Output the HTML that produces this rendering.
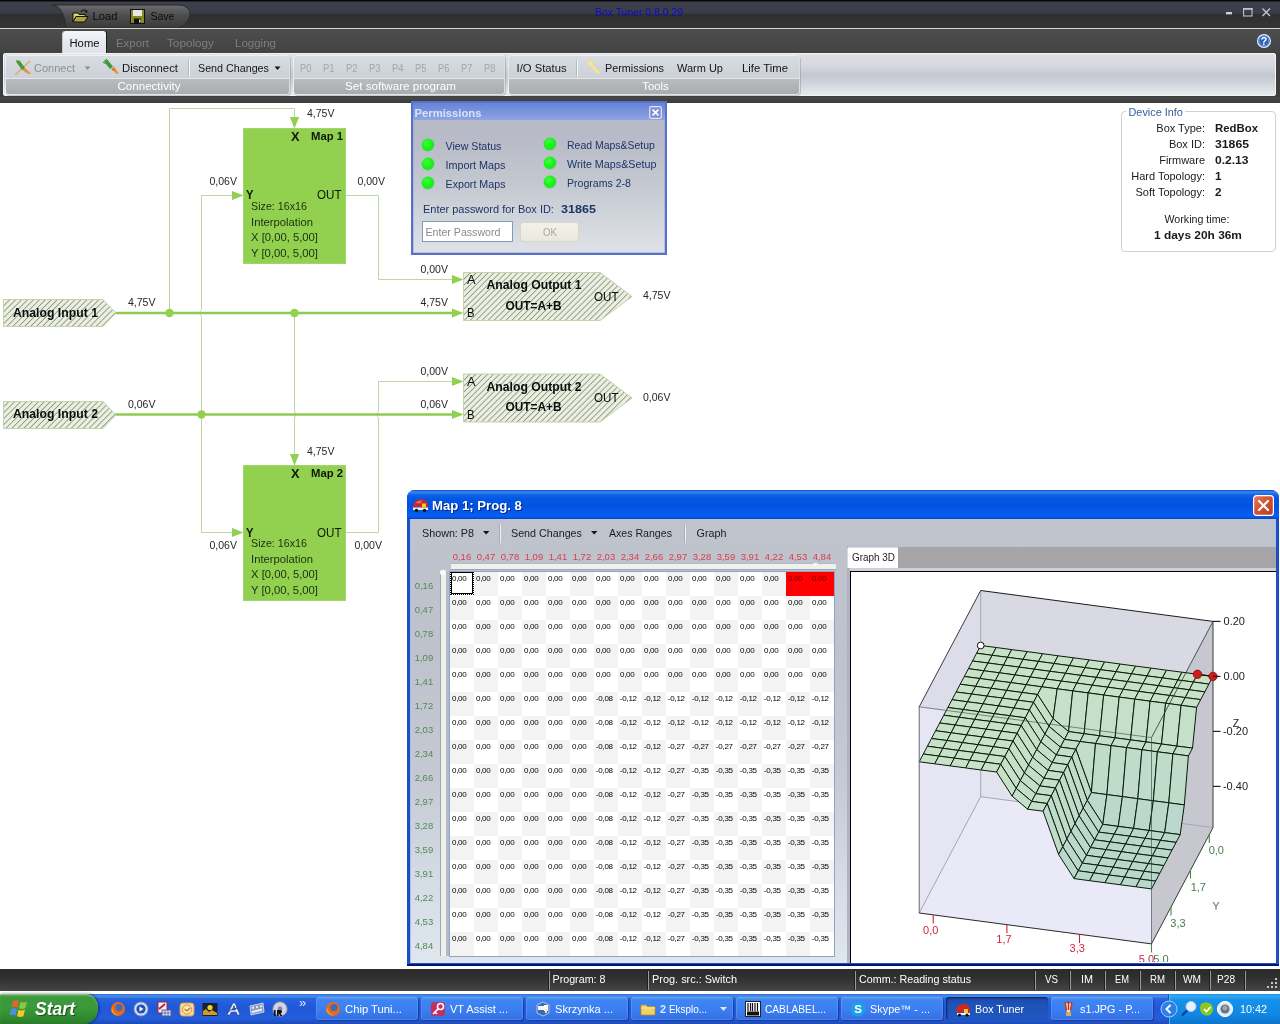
<!DOCTYPE html>
<html lang="en"><head><meta charset="utf-8"><title>Box Tuner 0.8.0.29</title><style>
html,body{margin:0;padding:0;}
body{width:1280px;height:1024px;overflow:hidden;background:#fff;position:relative;font-family:"Liberation Sans",sans-serif;}
#app{position:absolute;left:0;top:0;width:1280px;height:1024px;overflow:hidden;will-change:transform;}
#app div,#app span,#app svg{position:absolute;}
#app span{white-space:nowrap;}
#app .grid{display:grid;grid-template-columns:repeat(16,24px);grid-auto-rows:24px;}
#app .grid i{position:static;display:block;font-style:normal;font-size:8px;line-height:9px;padding-top:1.5px;text-align:left;padding-left:2px;letter-spacing:-.3px;box-sizing:border-box;height:24px;}
</style></head>
<body><div id="app">
<!-- canvas diagram -->
<svg style="left:0;top:103px" width="1280" height="866" viewBox="0 103 1280 866"><defs><pattern id="hat" width="4.2" height="4.2" patternUnits="userSpaceOnUse" patternTransform="rotate(-45)"><rect width="4.2" height="4.2" fill="#ebefdf"/><rect width="4.2" height="0.85" fill="#8b9482"/></pattern></defs><path d="M169.5,313 V108.5 H294.5 V118" fill="none" stroke="#bcd7a6" stroke-width="1"/><path d="M294.5,313 V411 q3,3.5 0,7 V455" fill="none" stroke="#bcd7a6" stroke-width="1"/><path d="M201.5,414.5 V316.5 q-3.5,-3.5 0,-7 V195.5 H232" fill="none" stroke="#bcd7a6" stroke-width="1"/><path d="M201.5,414.5 V532.5 H232" fill="none" stroke="#bcd7a6" stroke-width="1"/><path d="M346,195.5 H378.5 V279.5 H452" fill="none" stroke="#bcd7a6" stroke-width="1"/><path d="M346,532.5 H378.5 V418 q-3.5,-3.5 0,-7 V381.5 H452" fill="none" stroke="#bcd7a6" stroke-width="1"/><path d="M115,313 H453" fill="none" stroke="#8fcb52" stroke-width="2.4"/><path d="M115,414.5 H453" fill="none" stroke="#8fcb52" stroke-width="2.4"/><circle cx="169.5" cy="313" r="4.2" fill="#92d050"/><circle cx="294.5" cy="313" r="4.2" fill="#92d050"/><circle cx="201.5" cy="414.5" r="4.2" fill="#92d050"/><path d="M289.9,117.0 L294.5,128.5 L299.1,117.0 z" fill="#92d050"/><path d="M289.9,454.0 L294.5,465.5 L299.1,454.0 z" fill="#92d050"/><path d="M232.0,190.9 L243.5,195.5 L232.0,200.1 z" fill="#92d050"/><path d="M232.0,527.9 L243.5,532.5 L232.0,537.1 z" fill="#92d050"/><path d="M452.0,274.9 L463.5,279.5 L452.0,284.1 z" fill="#92d050"/><path d="M452.0,308.4 L463.5,313 L452.0,317.6 z" fill="#92d050"/><path d="M452.0,376.9 L463.5,381.5 L452.0,386.1 z" fill="#92d050"/><path d="M452.0,409.9 L463.5,414.5 L452.0,419.1 z" fill="#92d050"/><rect x="243.5" y="128.5" width="102" height="135" fill="#92d050" stroke="#a3d46e" stroke-width="1"/><rect x="243.5" y="465.5" width="102" height="135" fill="#92d050" stroke="#a3d46e" stroke-width="1"/><path d="M3.5,299.5 H103 L116,313 L103,326.5 H3.5 z" fill="url(#hat)" stroke="#c4d3a9" stroke-width="1"/><path d="M3.5,401.5 H103 L116,415 L103,428.5 H3.5 z" fill="url(#hat)" stroke="#c4d3a9" stroke-width="1"/><path d="M463.5,272.5 H600 L632,296.5 L600,320.5 H463.5 z" fill="url(#hat)" stroke="#c4d3a9" stroke-width="1"/><path d="M463.5,374.0 H600 L632,398.0 L600,422.0 H463.5 z" fill="url(#hat)" stroke="#c4d3a9" stroke-width="1"/></svg>
<span style="left:13.0px;top:305.5px;font-size:12.24px;line-height:15px;color:#0c0c0c;font-weight:bold;">Analog Input 1</span>
<span style="left:13.0px;top:407.0px;font-size:12.24px;line-height:15px;color:#0c0c0c;font-weight:bold;">Analog Input 2</span>
<span style="left:307.0px;top:106.5px;font-size:10.52px;line-height:13px;color:#26262c;">4,75V</span>
<span style="left:209.5px;top:174.5px;font-size:10.52px;line-height:13px;color:#26262c;">0,06V</span>
<span style="left:357.5px;top:174.5px;font-size:10.52px;line-height:13px;color:#26262c;">0,00V</span>
<span style="left:128.0px;top:295.5px;font-size:10.52px;line-height:13px;color:#26262c;">4,75V</span>
<span style="left:128.0px;top:397.5px;font-size:10.52px;line-height:13px;color:#26262c;">0,06V</span>
<span style="left:420.5px;top:263.0px;font-size:10.52px;line-height:13px;color:#26262c;">0,00V</span>
<span style="left:420.5px;top:295.5px;font-size:10.52px;line-height:13px;color:#26262c;">4,75V</span>
<span style="left:420.5px;top:364.5px;font-size:10.52px;line-height:13px;color:#26262c;">0,00V</span>
<span style="left:420.5px;top:397.5px;font-size:10.52px;line-height:13px;color:#26262c;">0,06V</span>
<span style="left:643.0px;top:289.0px;font-size:10.52px;line-height:13px;color:#26262c;">4,75V</span>
<span style="left:643.0px;top:391.0px;font-size:10.52px;line-height:13px;color:#26262c;">0,06V</span>
<span style="left:307.0px;top:444.5px;font-size:10.52px;line-height:13px;color:#26262c;">4,75V</span>
<span style="left:209.5px;top:538.5px;font-size:10.52px;line-height:13px;color:#26262c;">0,06V</span>
<span style="left:354.5px;top:538.5px;font-size:10.52px;line-height:13px;color:#26262c;">0,00V</span>
<span style="left:291.0px;top:129.0px;font-size:12.74px;line-height:15px;color:#10180a;font-weight:bold;">X</span>
<span style="left:311.0px;top:128.5px;font-size:11.29px;line-height:14px;color:#10180a;font-weight:bold;">Map 1</span>
<span style="left:246.0px;top:186.5px;font-size:13px;line-height:16px;color:#10180a;font-weight:bold;transform:scaleX(0.865);transform-origin:0 50%;">Y</span>
<span style="left:317.0px;top:186.5px;font-size:13px;line-height:16px;color:#10180a;transform:scaleX(0.893);transform-origin:0 50%;">OUT</span>
<span style="left:251.0px;top:200.0px;font-size:10.72px;line-height:13px;color:#1c3010;">Size: 16x16</span>
<span style="left:251.0px;top:214.5px;font-size:11.26px;line-height:14px;color:#1c3010;">Interpolation</span>
<span style="left:251.0px;top:230.0px;font-size:11.26px;line-height:14px;color:#1c3010;">X [0,00, 5,00]</span>
<span style="left:251.0px;top:245.5px;font-size:11.3px;line-height:14px;color:#1c3010;">Y [0,00, 5,00]</span>
<span style="left:291.0px;top:466.0px;font-size:12.74px;line-height:15px;color:#10180a;font-weight:bold;">X</span>
<span style="left:311.0px;top:465.5px;font-size:11.29px;line-height:14px;color:#10180a;font-weight:bold;">Map 2</span>
<span style="left:246.0px;top:524.5px;font-size:13px;line-height:16px;color:#10180a;font-weight:bold;transform:scaleX(0.865);transform-origin:0 50%;">Y</span>
<span style="left:317.0px;top:524.5px;font-size:13px;line-height:16px;color:#10180a;transform:scaleX(0.893);transform-origin:0 50%;">OUT</span>
<span style="left:251.0px;top:537.0px;font-size:10.72px;line-height:13px;color:#1c3010;">Size: 16x16</span>
<span style="left:251.0px;top:551.5px;font-size:11.26px;line-height:14px;color:#1c3010;">Interpolation</span>
<span style="left:251.0px;top:567.0px;font-size:11.26px;line-height:14px;color:#1c3010;">X [0,00, 5,00]</span>
<span style="left:251.0px;top:582.5px;font-size:11.3px;line-height:14px;color:#1c3010;">Y [0,00, 5,00]</span>
<span style="left:467.0px;top:272.0px;font-size:12.74px;line-height:15px;color:#0c0c0c;">A</span>
<span style="left:467.0px;top:306.0px;font-size:12.7px;line-height:15px;color:#0c0c0c;transform:scaleX(0.885);transform-origin:0 50%;">B</span>
<span style="left:486.5px;top:278.0px;font-size:12.22px;line-height:15px;color:#0c0c0c;font-weight:bold;">Analog Output 1</span>
<span style="left:505.5px;top:298.5px;font-size:11.86px;line-height:14px;color:#0c0c0c;font-weight:bold;">OUT=A+B</span>
<span style="left:593.5px;top:288.5px;font-size:13px;line-height:16px;color:#0c0c0c;transform:scaleX(0.893);transform-origin:0 50%;">OUT</span>
<span style="left:467.0px;top:373.5px;font-size:12.74px;line-height:15px;color:#0c0c0c;">A</span>
<span style="left:467.0px;top:407.5px;font-size:12.7px;line-height:15px;color:#0c0c0c;transform:scaleX(0.885);transform-origin:0 50%;">B</span>
<span style="left:486.5px;top:379.5px;font-size:12.22px;line-height:15px;color:#0c0c0c;font-weight:bold;">Analog Output 2</span>
<span style="left:505.5px;top:400.0px;font-size:11.86px;line-height:14px;color:#0c0c0c;font-weight:bold;">OUT=A+B</span>
<span style="left:593.5px;top:390.0px;font-size:13px;line-height:16px;color:#0c0c0c;transform:scaleX(0.893);transform-origin:0 50%;">OUT</span>
<!-- app chrome -->
<div style="left:0px;top:0px;width:1280px;height:28px;background:linear-gradient(#000 0,#0a0a0c 1px,#3e414c 2px,#3b3e48 13px,#2f2f30 14.5px,#353535 28px);"></div>
<svg style="left:50px;top:4px" width="150" height="25" viewBox="0 0 150 25"><defs><linearGradient id="qa" x1="0" y1="0" x2="0" y2="1"><stop offset="0" stop-color="#6b6c70"/><stop offset=".45" stop-color="#4e4e50"/><stop offset="1" stop-color="#3a3a3a"/></linearGradient></defs><path d="M2,1 C10,2 14,8 16,24 L128,24 C136,22 140,14 140,10 C140,5 136,1 128,1 Z" fill="url(#qa)" stroke="#2a2a2c" stroke-width="1"/></svg>
<svg style="left:72px;top:8px" width="18" height="16" viewBox="0 0 18 16"><path d="M9,4 C10,1 14,1 15,4" fill="none" stroke="#111" stroke-width="1.2"/><path d="M15,5 l-2.5,-1.5 l2.8,-1 z" fill="#111"/><path d="M1,5 h5 l1,1.5 h6 v2 h-9 l-3,5.5 z" fill="#d8d878" stroke="#111" stroke-width="1"/><path d="M4,8.5 h12 l-3.5,5.5 h-11.5 z" fill="#a8a830" stroke="#111" stroke-width="1"/></svg>
<span style="left:92.5px;top:10.0px;font-size:11.24px;line-height:13px;color:#0c0c0c;">Load</span>
<svg style="left:130px;top:9px" width="16" height="16" viewBox="0 0 16 16"><rect x="0.5" y="0.5" width="14" height="14" fill="#8a8a20" stroke="#111"/><rect x="3" y="1" width="9" height="6" fill="#e8e8e8"/><rect x="4" y="9.5" width="7" height="5" fill="#111"/><rect x="9" y="10.5" width="1.6" height="3" fill="#d8d8d8"/></svg>
<span style="left:150.5px;top:10.0px;font-size:10.53px;line-height:13px;color:#0c0c0c;">Save</span>
<span style="left:595.0px;top:6.5px;font-size:10.41px;line-height:12px;color:#0a0ad0;">Box Tuner 0.8.0.29</span>
<svg style="left:1220px;top:4px" width="56" height="18" viewBox="0 0 56 18"><rect x="6" y="8" width="6" height="2.4" fill="#cfcfcf"/><rect x="23.6" y="4.6" width="8.4" height="7.4" fill="none" stroke="#c4c4c8" stroke-width="1.1"/><rect x="23" y="4" width="9.6" height="1.8" fill="#c4c4c8"/><path d="M42.5,4.5 l7.5,7.5 M50,4.5 l-7.5,7.5" stroke="#c8c8cc" stroke-width="1.3"/></svg>
<div style="left:0px;top:28px;width:1280px;height:1px;background:#d6d6d6;"></div>
<div style="left:0px;top:29px;width:1280px;height:24px;background:linear-gradient(#4d4d4d,#434343);"></div>
<div style="left:63px;top:31px;width:43px;height:23px;background:linear-gradient(#f4f6fa,#e4e7ed 60%,#dfe2e8);border-radius:3px 3px 0 0;box-shadow:1px 0 0 #1c1c1c, -1px 0 0 #c8c8c8;"></div>
<span style="left:69.5px;top:35.7px;font-size:11.25px;line-height:14px;color:#101010;">Home</span>
<span style="left:116.0px;top:35.7px;font-size:11.42px;line-height:14px;color:#7e7e7e;">Export</span>
<span style="left:167.0px;top:35.7px;font-size:11.74px;line-height:14px;color:#7e7e7e;">Topology</span>
<span style="left:235.0px;top:35.7px;font-size:11.52px;line-height:14px;color:#7e7e7e;">Logging</span>
<svg style="left:1256px;top:33px" width="16" height="16" viewBox="0 0 16 16"><circle cx="8" cy="8" r="6.4" fill="#2b62bc" stroke="#e8f0ff" stroke-width="1.2"/><circle cx="8" cy="8" r="4.8" fill="none" stroke="#7aa4e8" stroke-width=".7"/><text x="8" y="12" font-size="10.5" font-weight="bold" text-anchor="middle" fill="#fff" font-family="Liberation Sans, sans-serif">?</text></svg>
<div style="left:0px;top:53px;width:1280px;height:50px;background:#3e3e3e;"></div>
<div style="left:0px;top:97px;width:1280px;height:6px;background:linear-gradient(#484848,#3a3a3a);"></div>
<div style="left:3px;top:53px;width:1273px;height:43px;background:linear-gradient(#e0e1e6 0,#d6d8de 30%,#c3c7d0 52%,#d3d8de 75%,#e8eeef 100%);border-radius:3px;box-shadow:0 0 0 1px #f4f4f6 inset;"></div>
<div style="left:6px;top:56px;width:283px;height:38px;border-radius:3px;background:linear-gradient(#d9dde3 0,#d2d6dd 10px,#cdd2da 22px,#b9bbbd 23px,#a9abac 38px);box-shadow:0 0 0 1px rgba(255,255,255,.55), 1px 1px 0 1px rgba(120,124,130,.35);"></div><div style="left:6px;top:78px;width:283px;height:1px;background:rgba(255,255,255,.55);"></div><span style="left:117.5px;top:79.0px;font-size:11.57px;line-height:14px;color:#fff;">Connectivity</span>
<div style="left:294px;top:56px;width:210px;height:38px;border-radius:3px;background:linear-gradient(#d9dde3 0,#d2d6dd 10px,#cdd2da 22px,#b9bbbd 23px,#a9abac 38px);box-shadow:0 0 0 1px rgba(255,255,255,.55), 1px 1px 0 1px rgba(120,124,130,.35);"></div><div style="left:294px;top:78px;width:210px;height:1px;background:rgba(255,255,255,.55);"></div><span style="left:345.0px;top:79.0px;font-size:11.61px;line-height:14px;color:#fff;">Set software program</span>
<div style="left:509px;top:56px;width:290px;height:38px;border-radius:3px;background:linear-gradient(#d9dde3 0,#d2d6dd 10px,#cdd2da 22px,#b9bbbd 23px,#a9abac 38px);box-shadow:0 0 0 1px rgba(255,255,255,.55), 1px 1px 0 1px rgba(120,124,130,.35);"></div><div style="left:509px;top:78px;width:290px;height:1px;background:rgba(255,255,255,.55);"></div><span style="left:642.3px;top:79.0px;font-size:11.35px;line-height:14px;color:#fff;">Tools</span>
<svg style="left:13px;top:58px" width="20" height="19" viewBox="0 0 20 19"><path d="M2,17 L17,3 M3,3 L18,16" stroke="#e0a860" stroke-width="1.6" opacity=".9"/><path d="M3,2 l4,1 l5,7 l-3,2 l-5,-7 z" fill="#3f9a3a"/><path d="M9,12 l3,-2 l5,6 l-2,-.2 z" fill="#e89040"/></svg>
<span style="left:34.0px;top:61.5px;font-size:11.01px;line-height:13px;color:#8d9096;">Connect</span>
<svg style="left:84px;top:66px" width="8" height="5"><path d="M0.5,0.5 h6 l-3,3.5 z" fill="#8d9096"/></svg>
<svg style="left:102px;top:58px" width="20" height="19" viewBox="0 0 20 19"><path d="M2,2 l4,0.5 l5,6 l-3,2.5 l-5,-6 z" fill="#3f9a3a"/><path d="M4,1 l1.5,2 M1,4 l2,1.5" stroke="#2a7a2a" stroke-width="1"/><path d="M9,11 l3,-2.5 l5,7.5 l-3,-.5 z" fill="#e89040"/><path d="M10,12 l3,-1" stroke="#c86820" stroke-width="1"/></svg>
<span style="left:122.0px;top:61.0px;font-size:11.32px;line-height:14px;color:#15151a;">Disconnect</span>
<div style="left:189px;top:59px;width:1px;height:18px;background:#f6f7f9;box-shadow:-1px 0 0 #b4b8c0;"></div>
<span style="left:198.0px;top:61.5px;font-size:10.73px;line-height:13px;color:#15151a;">Send Changes</span>
<svg style="left:274px;top:66px" width="8" height="5"><path d="M0.5,0.5 h6 l-3,3.5 z" fill="#15151a"/></svg>
<span style="left:300.0px;top:61.5px;font-size:11px;line-height:13px;color:#a2a6ad;transform:scaleX(0.855);transform-origin:0 50%;">P0</span>
<span style="left:323.0px;top:61.5px;font-size:11px;line-height:13px;color:#a2a6ad;transform:scaleX(0.855);transform-origin:0 50%;">P1</span>
<span style="left:346.0px;top:61.5px;font-size:11px;line-height:13px;color:#a2a6ad;transform:scaleX(0.855);transform-origin:0 50%;">P2</span>
<span style="left:369.0px;top:61.5px;font-size:11px;line-height:13px;color:#a2a6ad;transform:scaleX(0.855);transform-origin:0 50%;">P3</span>
<span style="left:392.0px;top:61.5px;font-size:11px;line-height:13px;color:#a2a6ad;transform:scaleX(0.855);transform-origin:0 50%;">P4</span>
<span style="left:415.0px;top:61.5px;font-size:11px;line-height:13px;color:#a2a6ad;transform:scaleX(0.855);transform-origin:0 50%;">P5</span>
<span style="left:438.0px;top:61.5px;font-size:11px;line-height:13px;color:#a2a6ad;transform:scaleX(0.855);transform-origin:0 50%;">P6</span>
<span style="left:461.0px;top:61.5px;font-size:11px;line-height:13px;color:#a2a6ad;transform:scaleX(0.855);transform-origin:0 50%;">P7</span>
<span style="left:484.0px;top:61.5px;font-size:11px;line-height:13px;color:#a2a6ad;transform:scaleX(0.855);transform-origin:0 50%;">P8</span>
<span style="left:516.5px;top:61.0px;font-size:11.25px;line-height:14px;color:#15151a;">I/O Status</span>
<div style="left:577px;top:59px;width:1px;height:18px;background:#f6f7f9;box-shadow:-1px 0 0 #b4b8c0;"></div>
<svg style="left:585px;top:59px" width="18" height="17" viewBox="0 0 18 17"><path d="M3,2 l3,-1 l3,3 l-1,2 l7,7 l-1,2 l-2,0 l-7,-8 l-2,0 z" fill="#f4e6a0" stroke="#ecd884" stroke-width=".7" opacity=".9"/></svg>
<span style="left:605.0px;top:61.5px;font-size:10.83px;line-height:13px;color:#15151a;">Permissions</span>
<span style="left:677.0px;top:61.5px;font-size:10.99px;line-height:13px;color:#15151a;">Warm Up</span>
<span style="left:742.0px;top:61.0px;font-size:11.34px;line-height:14px;color:#15151a;">Life Time</span>
<div style="left:0px;top:969px;width:1280px;height:22px;background:linear-gradient(#2a2a2a 0,#303030 40%,#454545 100%);"></div>
<div style="left:549px;top:971px;width:1px;height:19px;background:#9a9a9a;box-shadow:-1px 0 0 #1e1e1e;"></div>
<div style="left:648px;top:971px;width:1px;height:19px;background:#9a9a9a;box-shadow:-1px 0 0 #1e1e1e;"></div>
<div style="left:855px;top:971px;width:1px;height:19px;background:#9a9a9a;box-shadow:-1px 0 0 #1e1e1e;"></div>
<div style="left:1035px;top:971px;width:1px;height:19px;background:#9a9a9a;box-shadow:-1px 0 0 #1e1e1e;"></div>
<div style="left:1070px;top:971px;width:1px;height:19px;background:#9a9a9a;box-shadow:-1px 0 0 #1e1e1e;"></div>
<div style="left:1105px;top:971px;width:1px;height:19px;background:#9a9a9a;box-shadow:-1px 0 0 #1e1e1e;"></div>
<div style="left:1140px;top:971px;width:1px;height:19px;background:#9a9a9a;box-shadow:-1px 0 0 #1e1e1e;"></div>
<div style="left:1175px;top:971px;width:1px;height:19px;background:#9a9a9a;box-shadow:-1px 0 0 #1e1e1e;"></div>
<div style="left:1210px;top:971px;width:1px;height:19px;background:#9a9a9a;box-shadow:-1px 0 0 #1e1e1e;"></div>
<div style="left:1245px;top:971px;width:1px;height:19px;background:#9a9a9a;box-shadow:-1px 0 0 #1e1e1e;"></div>
<span style="left:552.5px;top:973.0px;font-size:10.71px;line-height:13px;color:#fff;">Program: 8</span>
<span style="left:652.0px;top:973.0px;font-size:10.93px;line-height:13px;color:#fff;">Prog. src.: Switch</span>
<span style="left:859.0px;top:973.0px;font-size:10.72px;line-height:13px;color:#fff;">Comm.: Reading status</span>
<span style="left:1045.0px;top:973.0px;font-size:11px;line-height:13px;color:#fff;transform:scaleX(0.886);transform-origin:0 50%;">VS</span>
<span style="left:1080.5px;top:973.0px;font-size:11px;line-height:13px;color:#fff;transform:scaleX(0.982);transform-origin:0 50%;">IM</span>
<span style="left:1114.5px;top:973.0px;font-size:11px;line-height:13px;color:#fff;transform:scaleX(0.848);transform-origin:0 50%;">EM</span>
<span style="left:1149.5px;top:973.0px;font-size:11px;line-height:13px;color:#fff;transform:scaleX(0.877);transform-origin:0 50%;">RM</span>
<span style="left:1182.5px;top:973.0px;font-size:11px;line-height:13px;color:#fff;transform:scaleX(0.921);transform-origin:0 50%;">WM</span>
<span style="left:1217.0px;top:973.0px;font-size:11px;line-height:13px;color:#fff;transform:scaleX(0.920);transform-origin:0 50%;">P28</span>
<svg style="left:1266px;top:977px" width="13" height="13" viewBox="0 0 13 13"><g fill="#c8c8c8"><rect x="9" y="1" width="2" height="2"/><rect x="5" y="5" width="2" height="2"/><rect x="9" y="5" width="2" height="2"/><rect x="1" y="9" width="2" height="2"/><rect x="5" y="9" width="2" height="2"/><rect x="9" y="9" width="2" height="2"/></g></svg>
<!-- taskbar -->
<div style="left:0px;top:991px;width:1280px;height:3px;background:#fff;"></div>
<div style="left:0px;top:994px;width:1280px;height:30px;background:linear-gradient(#3168d5 0,#4993e6 2px,#2663e0 5px,#2157d7 14px,#245ddb 24px,#1d4bb8 30px);"></div>
<div style="left:0px;top:994px;width:98px;height:30px;background:linear-gradient(#5eac56 0,#3c993c 4px,#3a9a3a 14px,#2f8a2f 24px,#2a7a2a 30px);border-radius:0 12px 14px 0/0 14px 16px 0;box-shadow:1px 0 3px rgba(0,0,40,.55), inset 0 1px 1px rgba(255,255,255,.35);"></div>
<svg style="left:10px;top:999px" width="20" height="20" viewBox="0 0 20 20"><path d="M3,2 q3,-1.5 6,0 l-1.5,6.5 q-3,-1.5 -6,0 z" fill="#e8632a"/><path d="M10.5,2.8 q3,1.5 6.5,0 l-1.6,6.4 q-3.4,1.5 -6.4,0 z" fill="#8cc63f"/><path d="M1,10 q3,-1.5 6,0 l-1.5,6.5 q-3,-1.5 -6,0 z" fill="#4a8ee8"/><path d="M8.5,10.8 q3,1.5 6.5,0 l-1.6,6.4 q-3.4,1.5 -6.4,0 z" fill="#f7c52b"/></svg>
<span style="left:35.0px;top:998.5px;font-size:17.56px;line-height:21px;color:#fff;font-weight:bold;font-style:italic;text-shadow:1px 1px 1px rgba(0,0,0,.5);">Start</span>
<svg style="left:110px;top:1001px" width="16" height="16" viewBox="0 0 16 16"><circle cx="8" cy="8" r="7" fill="#e8691c"/><circle cx="9" cy="6.5" r="3.6" fill="#3d6db8"/><path d="M2,6 q1,7 7,8 q-5,1 -7.5,-4 z" fill="#f9a12a"/></svg>
<svg style="left:133px;top:1001px" width="16" height="16" viewBox="0 0 16 16"><circle cx="8" cy="8" r="7" fill="#d8dfe8" stroke="#7f95b8"/><circle cx="8" cy="8" r="4.6" fill="#2050c0"/><path d="M6.5,5.5 l4,2.5 l-4,2.5 z" fill="#fff"/></svg>
<svg style="left:156px;top:1001px" width="16" height="16" viewBox="0 0 16 16"><rect x="2" y="1" width="9" height="11" fill="#f4f4f4" stroke="#a02030"/><path d="M3,8 l6,-5" stroke="#c02040" stroke-width="2"/><rect x="6" y="9" width="9" height="6" fill="#e8e8f0" stroke="#5060a0"/><path d="M6,12 h9 M9,9 v6 M12,9 v6" stroke="#5060a0" stroke-width=".8"/></svg>
<svg style="left:179px;top:1001px" width="16" height="16" viewBox="0 0 16 16"><rect x="1" y="2" width="14" height="13" rx="3" fill="#f4d9a0" stroke="#d8a050"/><circle cx="8" cy="8.5" r="4.5" fill="#fbe9b8" stroke="#d89030"/><path d="M5.5,8 l2.5,2 l3,-3" stroke="#c07010" fill="none" stroke-width="1.2"/></svg>
<svg style="left:202px;top:1001px" width="16" height="16" viewBox="0 0 16 16"><rect x="0.5" y="2" width="15" height="13" fill="#1a2030"/><circle cx="8" cy="6.5" r="2.6" fill="#f4d030"/><path d="M1,14 v-4 l3,-2 l3,3 l3,-2 l5,3 v2 z" fill="#c8a020"/></svg>
<svg style="left:226px;top:1001px" width="16" height="16" viewBox="0 0 16 16"><path d="M1,14 l6,-12 h2 l5,12 h-2.6 l-1.2,-3 h-5 l-1.4,3 z M6.2,9 h3.4 l-1.6,-4.4 z" fill="#f4f6ff" stroke="#2a50a8" stroke-width=".7"/><path d="M0,12 q8,-6 16,-5" stroke="#2a50a8" fill="none"/></svg>
<svg style="left:249px;top:1001px" width="16" height="16" viewBox="0 0 16 16"><path d="M1,5 l13,-3 l1,9 l-13,3 z" fill="#8c9cb8" stroke="#dfe6f4" stroke-width=".8"/><path d="M3,6 l2,-.5 v2 l-2,.5 z M7,5.2 l2,-.5 v2 l-2,.5 z M11,4.4 l2,-.5 v2 l-2,.5 z M3,10 l10,-2.4 v2 l-10,2.4 z" fill="#e8eef8"/></svg>
<svg style="left:272px;top:1001px" width="16" height="16" viewBox="0 0 16 16"><circle cx="8" cy="8" r="7.2" fill="#d0d4e4" stroke="#8088a8"/><circle cx="8" cy="8" r="2.4" fill="#7a84b0"/><path d="M2,15 v-6 h1.6 v6 z M5,15 v-6 h3 q2,0 2,1.8 q0,1.4 -1.4,1.8 l1.8,2.4 h-2 l-1.4,-2.2 h-.4 v2.2 z" fill="#101010"/></svg>
<span style="left:299.0px;top:995.0px;font-size:13px;line-height:16px;color:#dfe9ff;">»</span>
<div style="left:316px;top:997px;width:102px;height:23px;background:linear-gradient(#5a9af8 0,#3f86f2 3px,#3a7df0 60%,#336fe2 100%);border-radius:3px;box-shadow:inset 0 0 0 1px rgba(255,255,255,.12), 1px 1px 1px rgba(0,0,60,.35);"></div>
<svg style="left:325px;top:1001px" width="16" height="16" viewBox="0 0 16 16"><circle cx="8" cy="8" r="7" fill="#e8691c"/><circle cx="9" cy="6.5" r="3.6" fill="#3d6db8"/><path d="M2,6 q1,7 7,8 q-5,1 -7.5,-4 z" fill="#f9a12a"/></svg>
<span style="left:345.0px;top:1002.5px;font-size:11px;line-height:13px;color:#fff;transform:scaleX(1.024);transform-origin:0 50%;">Chip Tuni...</span>
<div style="left:421px;top:997px;width:102px;height:23px;background:linear-gradient(#5a9af8 0,#3f86f2 3px,#3a7df0 60%,#336fe2 100%);border-radius:3px;box-shadow:inset 0 0 0 1px rgba(255,255,255,.12), 1px 1px 1px rgba(0,0,60,.35);"></div>
<svg style="left:430px;top:1001px" width="16" height="16" viewBox="0 0 16 16"><rect x="1" y="1" width="14" height="14" rx="3" fill="#c03060"/><circle cx="10.5" cy="5.5" r="3" fill="none" stroke="#fff" stroke-width="1.6"/><path d="M8.5,7.5 l-5.5,5.5 M5,11 l2,2" stroke="#fff" stroke-width="1.6"/></svg>
<span style="left:450.0px;top:1002.5px;font-size:11px;line-height:13px;color:#fff;transform:scaleX(1.002);transform-origin:0 50%;">VT Assist ...</span>
<div style="left:526px;top:997px;width:102px;height:23px;background:linear-gradient(#5a9af8 0,#3f86f2 3px,#3a7df0 60%,#336fe2 100%);border-radius:3px;box-shadow:inset 0 0 0 1px rgba(255,255,255,.12), 1px 1px 1px rgba(0,0,60,.35);"></div>
<svg style="left:535px;top:1001px" width="16" height="16" viewBox="0 0 16 16"><path d="M2,4 l6,-3 l6,3 v8 l-6,3 l-6,-3 z" fill="#3a6ab8" stroke="#dfe8f8" stroke-width=".7"/><rect x="3" y="5" width="6" height="4" fill="#f4f4f4"/><rect x="9" y="4" width="4" height="6" fill="#f8f8ff"/><rect x="10" y="8" width="2" height="4" fill="#f8e0a0"/></svg>
<span style="left:555.0px;top:1002.5px;font-size:11px;line-height:13px;color:#fff;transform:scaleX(1.009);transform-origin:0 50%;">Skrzynka ...</span>
<div style="left:631px;top:997px;width:102px;height:23px;background:linear-gradient(#5a9af8 0,#3f86f2 3px,#3a7df0 60%,#336fe2 100%);border-radius:3px;box-shadow:inset 0 0 0 1px rgba(255,255,255,.12), 1px 1px 1px rgba(0,0,60,.35);"></div>
<svg style="left:640px;top:1001px" width="16" height="16" viewBox="0 0 16 16"><path d="M1,4 h5 l1.5,1.5 h7.5 v8.5 h-14 z" fill="#f4d060" stroke="#b89020" stroke-width=".8"/><path d="M1,7 h14" stroke="#fbe9a0"/></svg>
<span style="left:660.0px;top:1002.5px;font-size:10.79px;line-height:13px;color:#dfe8ff;font-weight:bold;">2</span>
<span style="left:669.0px;top:1002.5px;font-size:11px;line-height:13px;color:#fff;transform:scaleX(0.901);transform-origin:0 50%;">Eksplo...</span>
<svg style="left:720px;top:1007px" width="8" height="5"><path d="M0,0 h7 l-3.5,4 z" fill="#dfe8ff"/></svg>
<div style="left:736px;top:997px;width:102px;height:23px;background:linear-gradient(#5a9af8 0,#3f86f2 3px,#3a7df0 60%,#336fe2 100%);border-radius:3px;box-shadow:inset 0 0 0 1px rgba(255,255,255,.12), 1px 1px 1px rgba(0,0,60,.35);"></div>
<svg style="left:745px;top:1001px" width="16" height="16" viewBox="0 0 16 16"><rect x="0.5" y="0.5" width="15" height="15" fill="#fff" stroke="#222"/><path d="M3,2 v8 M5.5,2 v8 M7.5,2 v8 M10,2 v8 M12.5,2 v8" stroke="#111" stroke-width="1.2"/><rect x="2" y="10.5" width="12" height="4" fill="#111"/></svg>
<span style="left:765.0px;top:1002.5px;font-size:11px;line-height:13px;color:#fff;transform:scaleX(0.924);transform-origin:0 50%;">CABLABEL...</span>
<div style="left:841px;top:997px;width:102px;height:23px;background:linear-gradient(#5a9af8 0,#3f86f2 3px,#3a7df0 60%,#336fe2 100%);border-radius:3px;box-shadow:inset 0 0 0 1px rgba(255,255,255,.12), 1px 1px 1px rgba(0,0,60,.35);"></div>
<svg style="left:850px;top:1001px" width="16" height="16" viewBox="0 0 16 16"><circle cx="8" cy="8" r="7.5" fill="#1aa0e8"/><text x="8" y="12.2" font-size="11.5" font-weight="bold" text-anchor="middle" fill="#fff" font-family="Liberation Sans, sans-serif">S</text></svg>
<span style="left:870.0px;top:1002.5px;font-size:11px;line-height:13px;color:#fff;transform:scaleX(0.991);transform-origin:0 50%;">Skype™ - ...</span>
<div style="left:946px;top:997px;width:102px;height:23px;background:linear-gradient(#1a48a8,#1e52b7 30%,#2058c0);border-radius:3px;box-shadow:inset 1px 1px 2px rgba(0,0,30,.6);"></div>
<svg style="left:955px;top:1001px" width="16" height="16" viewBox="0 0 16 16"><path d="M1,11 q0,-7 6,-8 q5,-1 8,4 v5 z" fill="#c82828"/><path d="M2,12 h13 v2 h-13 z" fill="#f0f0f0"/><circle cx="4.5" cy="14" r="1.6" fill="#111"/><circle cx="12" cy="14" r="1.6" fill="#111"/><rect x="9" y="8" width="4" height="4" fill="#f0d020"/></svg>
<span style="left:975.0px;top:1002.5px;font-size:11px;line-height:13px;color:#fff;transform:scaleX(0.977);transform-origin:0 50%;">Box Tuner</span>
<div style="left:1051px;top:997px;width:102px;height:23px;background:linear-gradient(#5a9af8 0,#3f86f2 3px,#3a7df0 60%,#336fe2 100%);border-radius:3px;box-shadow:inset 0 0 0 1px rgba(255,255,255,.12), 1px 1px 1px rgba(0,0,60,.35);"></div>
<svg style="left:1060px;top:1001px" width="16" height="16" viewBox="0 0 16 16"><path d="M4,2 l3,10 h3 l3,-10 z" fill="#e8e0d0" stroke="#806040" stroke-width=".7"/><path d="M5,1 l1.5,8 M8.5,0 v9 M12,1 l-1.5,8" stroke="#c83030" stroke-width="1.4"/><rect x="6" y="11" width="5" height="4" fill="#d0b060"/></svg>
<span style="left:1080.0px;top:1002.5px;font-size:11px;line-height:13px;color:#fff;transform:scaleX(0.985);transform-origin:0 50%;">s1.JPG - P...</span>
<div style="left:1169px;top:994px;width:111px;height:30px;background:linear-gradient(#1a8fe8 0,#35a8f4 2px,#1592ea 6px,#1088e4 20px,#0e74cc 30px);box-shadow:-1px 0 0 #0c58b0, inset 1px 0 0 #4cb4f8;"></div>
<svg style="left:1160px;top:1000px" width="18" height="18" viewBox="0 0 18 18"><circle cx="9" cy="9" r="8" fill="#2f7fe8" stroke="#9cccff" stroke-width="1"/><path d="M10.5,5 l-4,4 l4,4" stroke="#fff" stroke-width="2" fill="none"/></svg>
<svg style="left:1180px;top:1000px" width="18" height="18" viewBox="0 0 18 18"><circle cx="11" cy="6.5" r="5" fill="#e8f0ff" stroke="#b8c8f0"/><path d="M7,10.5 l-5,5" stroke="#1a3a90" stroke-width="2.4"/></svg>
<svg style="left:1199px;top:1001px" width="16" height="16" viewBox="0 0 16 16"><path d="M2,3 q6,-4 11,1 q3,6 -2,10 q-6,2 -9,-3 q-2,-4 0,-8 z" fill="#8cc820"/><path d="M5,8 l2.5,2.5 l4,-4.5" stroke="#fff" stroke-width="1.6" fill="none"/></svg>
<svg style="left:1216px;top:1000px" width="18" height="18" viewBox="0 0 18 18"><circle cx="9" cy="9" r="7.6" fill="#e4ecf4" stroke="#fff"/><circle cx="9" cy="9" r="4.6" fill="#687888"/><circle cx="9" cy="8" r="2.4" fill="#98a8b8"/></svg>
<span style="left:1240.0px;top:1002.5px;font-size:10.79px;line-height:13px;color:#fff;">10:42</span>
<!-- floating panels -->
<div style="left:411px;top:101px;width:256px;height:154px;background:linear-gradient(#b4b8c4 0,#b9bcc8 25%,#c4c8d0 55%,#dfe3e8 100%);border:2px solid #5870c8;box-sizing:border-box;box-shadow:0 0 0 0.5px #8ea0e0 inset;"></div>
<div style="left:413px;top:103px;width:252px;height:17px;background:linear-gradient(#6684d8,#7d97de 60%,#8ea5e2);"></div>
<span style="left:414.5px;top:106.0px;font-size:11.27px;line-height:14px;color:#d9e3f8;font-weight:bold;">Permissions</span>
<svg style="left:649px;top:106px" width="13" height="13" viewBox="0 0 13 13"><rect x=".7" y=".7" width="11.6" height="11.6" rx="1.5" fill="#7a90d8" stroke="#f4dcec" stroke-width="1.2"/><path d="M3.6,3.6 l5.8,5.8 M9.4,3.6 l-5.8,5.8" stroke="#fff" stroke-width="1.7"/></svg>
<svg style="left:420px;top:137px" width="16" height="16" viewBox="0 0 16 16"><defs><radialGradient id="led428145" cx=".4" cy=".35" r=".7"><stop offset="0" stop-color="#40ff40"/><stop offset=".7" stop-color="#10f010"/><stop offset="1" stop-color="#30d030" stop-opacity=".6"/></radialGradient></defs><circle cx="8" cy="8" r="6.4" fill="url(#led428145)"/></svg>
<svg style="left:420px;top:156px" width="16" height="16" viewBox="0 0 16 16"><defs><radialGradient id="led428164" cx=".4" cy=".35" r=".7"><stop offset="0" stop-color="#40ff40"/><stop offset=".7" stop-color="#10f010"/><stop offset="1" stop-color="#30d030" stop-opacity=".6"/></radialGradient></defs><circle cx="8" cy="8" r="6.4" fill="url(#led428164)"/></svg>
<svg style="left:420px;top:175px" width="16" height="16" viewBox="0 0 16 16"><defs><radialGradient id="led428183" cx=".4" cy=".35" r=".7"><stop offset="0" stop-color="#40ff40"/><stop offset=".7" stop-color="#10f010"/><stop offset="1" stop-color="#30d030" stop-opacity=".6"/></radialGradient></defs><circle cx="8" cy="8" r="6.4" fill="url(#led428183)"/></svg>
<svg style="left:542px;top:136px" width="16" height="16" viewBox="0 0 16 16"><defs><radialGradient id="led550144" cx=".4" cy=".35" r=".7"><stop offset="0" stop-color="#40ff40"/><stop offset=".7" stop-color="#10f010"/><stop offset="1" stop-color="#30d030" stop-opacity=".6"/></radialGradient></defs><circle cx="8" cy="8" r="6.4" fill="url(#led550144)"/></svg>
<svg style="left:542px;top:155px" width="16" height="16" viewBox="0 0 16 16"><defs><radialGradient id="led550163" cx=".4" cy=".35" r=".7"><stop offset="0" stop-color="#40ff40"/><stop offset=".7" stop-color="#10f010"/><stop offset="1" stop-color="#30d030" stop-opacity=".6"/></radialGradient></defs><circle cx="8" cy="8" r="6.4" fill="url(#led550163)"/></svg>
<svg style="left:542px;top:174px" width="16" height="16" viewBox="0 0 16 16"><defs><radialGradient id="led550182" cx=".4" cy=".35" r=".7"><stop offset="0" stop-color="#40ff40"/><stop offset=".7" stop-color="#10f010"/><stop offset="1" stop-color="#30d030" stop-opacity=".6"/></radialGradient></defs><circle cx="8" cy="8" r="6.4" fill="url(#led550182)"/></svg>
<span style="left:445.5px;top:139.5px;font-size:10.64px;line-height:13px;color:#1c3566;">View Status</span>
<span style="left:445.5px;top:158.5px;font-size:10.8px;line-height:13px;color:#1c3566;">Import Maps</span>
<span style="left:445.5px;top:177.5px;font-size:10.69px;line-height:13px;color:#1c3566;">Export Maps</span>
<span style="left:567.0px;top:138.5px;font-size:10.48px;line-height:13px;color:#1c3566;">Read Maps&amp;Setup</span>
<span style="left:567.0px;top:157.5px;font-size:10.76px;line-height:13px;color:#1c3566;">Write Maps&amp;Setup</span>
<span style="left:567.0px;top:176.5px;font-size:10.56px;line-height:13px;color:#1c3566;">Programs 2-8</span>
<span style="left:423.0px;top:202.5px;font-size:10.96px;line-height:13px;color:#1c3566;">Enter password for Box ID:</span>
<span style="left:561.0px;top:202.0px;font-size:11.3px;line-height:14px;color:#1c3566;font-weight:bold;transform:scaleX(1.114);transform-origin:0 50%;">31865</span>
<div style="left:422px;top:221px;width:91px;height:21px;background:#fff;border:1px solid #7f9db9;box-sizing:border-box;"></div>
<span style="left:425.5px;top:225.5px;font-size:10.62px;line-height:13px;color:#8a8a8a;">Enter Password</span>
<div style="left:520px;top:222px;width:59px;height:20px;background:linear-gradient(#f3f2ea,#ebe9dc);border:1px solid #d8d6c6;border-radius:3px;box-sizing:border-box;"></div>
<span style="left:542.5px;top:225.5px;font-size:11px;line-height:13px;color:#a8a89c;transform:scaleX(0.881);transform-origin:0 50%;">OK</span>
<div style="left:1121px;top:111px;width:155px;height:141px;border:1px solid #d2d2c8;border-radius:4px;box-sizing:border-box;background:#fff;"></div>
<div style="left:1126px;top:106px;width:59px;height:12px;background:#fff;"></div>
<span style="left:1128.5px;top:105.5px;font-size:10.89px;line-height:13px;color:#3a5a9c;">Device Info</span>
<span style="left:1156.3px;top:121.5px;font-size:11px;line-height:13px;color:#1a1a1a;">Box Type:</span>
<span style="left:1214.5px;top:121.0px;font-size:11.3px;line-height:14px;color:#1a1a1a;font-weight:bold;transform:scaleX(1.007);transform-origin:0 50%;">RedBox</span>
<span style="left:1168.9px;top:137.5px;font-size:11px;line-height:13px;color:#1a1a1a;">Box ID:</span>
<span style="left:1214.5px;top:137.0px;font-size:11.3px;line-height:14px;color:#1a1a1a;font-weight:bold;transform:scaleX(1.082);transform-origin:0 50%;">31865</span>
<span style="left:1159.2px;top:153.5px;font-size:11px;line-height:13px;color:#1a1a1a;">Firmware</span>
<span style="left:1214.5px;top:153.0px;font-size:11.3px;line-height:14px;color:#1a1a1a;font-weight:bold;transform:scaleX(1.066);transform-origin:0 50%;">0.2.13</span>
<span style="left:1131.2px;top:169.5px;font-size:11px;line-height:13px;color:#1a1a1a;">Hard Topology:</span>
<span style="left:1214.5px;top:169.0px;font-size:11.3px;line-height:14px;color:#1a1a1a;font-weight:bold;transform:scaleX(1.034);transform-origin:0 50%;">1</span>
<span style="left:1135.5px;top:185.5px;font-size:11px;line-height:13px;color:#1a1a1a;">Soft Topology:</span>
<span style="left:1214.5px;top:185.0px;font-size:11.3px;line-height:14px;color:#1a1a1a;font-weight:bold;transform:scaleX(1.034);transform-origin:0 50%;">2</span>
<span style="left:1164.5px;top:212.5px;font-size:10.67px;line-height:13px;color:#1a1a1a;">Working time:</span>
<span style="left:1153.5px;top:228.0px;font-size:11.3px;line-height:14px;color:#1a1a1a;font-weight:bold;transform:scaleX(1.053);transform-origin:0 50%;">1 days 20h 36m</span>
<!-- map window -->
<div style="left:407px;top:490px;width:872px;height:476px;background:#1c4fc4;border-radius:8px 8px 0 0;"></div>
<div style="left:407px;top:490px;width:872px;height:29px;border-radius:8px 8px 0 0;background:linear-gradient(#0a4fd0 0,#3d86f0 2px,#0e62ea 5px,#0355e4 9px,#0252e0 16px,#0458ec 22px,#0660f2 26px,#0450dd 28px,#0240c0 29px);"></div>
<div style="left:410px;top:519px;width:866px;height:444px;background:linear-gradient(#bec3cc 0,#bdc2cd 30%,#c4c9d4 58%,#d6dce5 82%,#e0e6ee 100%);box-shadow:inset 1px 0 0 #a9c0ee, inset -1px 0 0 #a9c0ee;"></div>
<div style="left:407px;top:963px;width:872px;height:3px;background:linear-gradient(#3a6ad0,#00187a 1.5px,#00146a);"></div>
<div style="left:446px;top:572px;width:3px;height:384px;background:#b3bacb;"></div>
<svg style="left:412px;top:497px" width="17" height="16" viewBox="0 0 17 16"><path d="M1,10 q0,-6 6,-7.5 q6,-1 9,4 v4 z" fill="#c8262c"/><path d="M3,6 q3,-3 7,-2.5 l-1,3 z" fill="#e86a5a"/><path d="M1,10.5 h15 v2.5 h-15 z" fill="#f2f2f2"/><rect x="10" y="6.5" width="4" height="4" fill="#e8cf2a"/><circle cx="4.5" cy="13.5" r="1.8" fill="#1a1a1a"/><circle cx="12.5" cy="13.5" r="1.8" fill="#1a1a1a"/></svg>
<span style="left:432.0px;top:498.0px;font-size:13.17px;line-height:16px;color:#fff;font-weight:bold;text-shadow:1px 1px 0 rgba(0,20,90,.7);">Map 1; Prog. 8</span>
<svg style="left:1253px;top:495px" width="21" height="21" viewBox="0 0 21 21"><defs><linearGradient id="cl" x1="0" y1="0" x2="1" y2="1"><stop offset="0" stop-color="#e8795a"/><stop offset=".5" stop-color="#d2502f"/><stop offset="1" stop-color="#b83a20"/></linearGradient></defs><rect x=".6" y=".6" width="19.8" height="19.8" rx="3" fill="url(#cl)" stroke="#fff" stroke-width="1.2"/><path d="M6,6 l9,9 M15,6 l-9,9" stroke="#fff" stroke-width="2.2" stroke-linecap="round"/></svg>
<span style="left:422.0px;top:526.5px;font-size:10.75px;line-height:13px;color:#1c1c22;">Shown: P8</span>
<svg style="left:483px;top:531px" width="7" height="4"><path d="M0,0 h6.4 l-3.2,3.6 z" fill="#111"/></svg>
<div style="left:500px;top:525px;width:1px;height:18px;background:#eef0f4;box-shadow:-1px 0 0 #a9aebb;"></div>
<span style="left:511.0px;top:526.5px;font-size:10.73px;line-height:13px;color:#1c1c22;">Send Changes</span>
<svg style="left:591px;top:531px" width="7" height="4"><path d="M0,0 h6.4 l-3.2,3.6 z" fill="#111"/></svg>
<span style="left:609.0px;top:526.5px;font-size:10.59px;line-height:13px;color:#1c1c22;">Axes Ranges</span>
<div style="left:685px;top:525px;width:1px;height:18px;background:#eef0f4;box-shadow:-1px 0 0 #a9aebb;"></div>
<span style="left:696.5px;top:526.5px;font-size:10.79px;line-height:13px;color:#1c1c22;">Graph</span>
<span style="left:452.7px;top:551.0px;font-size:9.51px;line-height:11px;color:#d8404c;">0,16</span>
<span style="left:414.7px;top:580.0px;font-size:9.51px;line-height:11px;color:#538a53;">0,16</span>
<span style="left:476.7px;top:551.0px;font-size:9.51px;line-height:11px;color:#d8404c;">0,47</span>
<span style="left:414.7px;top:604.0px;font-size:9.51px;line-height:11px;color:#538a53;">0,47</span>
<span style="left:500.7px;top:551.0px;font-size:9.51px;line-height:11px;color:#d8404c;">0,78</span>
<span style="left:414.7px;top:628.0px;font-size:9.51px;line-height:11px;color:#538a53;">0,78</span>
<span style="left:524.7px;top:551.0px;font-size:9.51px;line-height:11px;color:#d8404c;">1,09</span>
<span style="left:414.7px;top:652.0px;font-size:9.51px;line-height:11px;color:#538a53;">1,09</span>
<span style="left:548.7px;top:551.0px;font-size:9.51px;line-height:11px;color:#d8404c;">1,41</span>
<span style="left:414.7px;top:676.0px;font-size:9.51px;line-height:11px;color:#538a53;">1,41</span>
<span style="left:572.7px;top:551.0px;font-size:9.51px;line-height:11px;color:#d8404c;">1,72</span>
<span style="left:414.7px;top:700.0px;font-size:9.51px;line-height:11px;color:#538a53;">1,72</span>
<span style="left:596.7px;top:551.0px;font-size:9.51px;line-height:11px;color:#d8404c;">2,03</span>
<span style="left:414.7px;top:724.0px;font-size:9.51px;line-height:11px;color:#538a53;">2,03</span>
<span style="left:620.7px;top:551.0px;font-size:9.51px;line-height:11px;color:#d8404c;">2,34</span>
<span style="left:414.7px;top:748.0px;font-size:9.51px;line-height:11px;color:#538a53;">2,34</span>
<span style="left:644.7px;top:551.0px;font-size:9.51px;line-height:11px;color:#d8404c;">2,66</span>
<span style="left:414.7px;top:772.0px;font-size:9.51px;line-height:11px;color:#538a53;">2,66</span>
<span style="left:668.7px;top:551.0px;font-size:9.51px;line-height:11px;color:#d8404c;">2,97</span>
<span style="left:414.7px;top:796.0px;font-size:9.51px;line-height:11px;color:#538a53;">2,97</span>
<span style="left:692.7px;top:551.0px;font-size:9.51px;line-height:11px;color:#d8404c;">3,28</span>
<span style="left:414.7px;top:820.0px;font-size:9.51px;line-height:11px;color:#538a53;">3,28</span>
<span style="left:716.7px;top:551.0px;font-size:9.51px;line-height:11px;color:#d8404c;">3,59</span>
<span style="left:414.7px;top:844.0px;font-size:9.51px;line-height:11px;color:#538a53;">3,59</span>
<span style="left:740.7px;top:551.0px;font-size:9.51px;line-height:11px;color:#d8404c;">3,91</span>
<span style="left:414.7px;top:868.0px;font-size:9.51px;line-height:11px;color:#538a53;">3,91</span>
<span style="left:764.7px;top:551.0px;font-size:9.51px;line-height:11px;color:#d8404c;">4,22</span>
<span style="left:414.7px;top:892.0px;font-size:9.51px;line-height:11px;color:#538a53;">4,22</span>
<span style="left:788.7px;top:551.0px;font-size:9.51px;line-height:11px;color:#d8404c;">4,53</span>
<span style="left:414.7px;top:916.0px;font-size:9.51px;line-height:11px;color:#538a53;">4,53</span>
<span style="left:812.7px;top:551.0px;font-size:9.51px;line-height:11px;color:#d8404c;">4,84</span>
<span style="left:414.7px;top:940.0px;font-size:9.51px;line-height:11px;color:#538a53;">4,84</span>
<div style="left:451px;top:564px;width:385px;height:5px;background:#f1f1ec;box-shadow:0 1px 0 #9ea4b4, 0 -1px 0 #b4b9c6;"></div>
<div style="left:813px;top:563px;width:5px;height:3px;background:#fafaf6;border-radius:2px;"></div>
<div style="left:441px;top:572px;width:5px;height:384px;background:#f1f1ec;box-shadow:-1px 0 0 #9ea4b4;"></div>
<div style="left:440px;top:570px;width:6px;height:5px;background:#fafaf6;border-radius:2px;"></div>
<div style="left:449px;top:571px;width:386px;height:386px;background:#8fa3c4;"></div>
<div class="grid" style="left:450px;top:572px;width:384px;height:384px;"><i style="background:#ffffff;color:#000">0,00</i><i style="background:#f3f3f3;color:#000">0,00</i><i style="background:#ffffff;color:#000">0,00</i><i style="background:#f3f3f3;color:#000">0,00</i><i style="background:#ffffff;color:#000">0,00</i><i style="background:#f3f3f3;color:#000">0,00</i><i style="background:#ffffff;color:#000">0,00</i><i style="background:#f3f3f3;color:#000">0,00</i><i style="background:#ffffff;color:#000">0,00</i><i style="background:#f3f3f3;color:#000">0,00</i><i style="background:#ffffff;color:#000">0,00</i><i style="background:#f3f3f3;color:#000">0,00</i><i style="background:#ffffff;color:#000">0,00</i><i style="background:#f3f3f3;color:#000">0,00</i><i style="background:#ff0000;color:#7a0000">0,00</i><i style="background:#ff0000;color:#7a0000">0,00</i><i style="background:#f3f3f3;color:#000">0,00</i><i style="background:#ffffff;color:#000">0,00</i><i style="background:#f3f3f3;color:#000">0,00</i><i style="background:#ffffff;color:#000">0,00</i><i style="background:#f3f3f3;color:#000">0,00</i><i style="background:#ffffff;color:#000">0,00</i><i style="background:#f3f3f3;color:#000">0,00</i><i style="background:#ffffff;color:#000">0,00</i><i style="background:#f3f3f3;color:#000">0,00</i><i style="background:#ffffff;color:#000">0,00</i><i style="background:#f3f3f3;color:#000">0,00</i><i style="background:#ffffff;color:#000">0,00</i><i style="background:#f3f3f3;color:#000">0,00</i><i style="background:#ffffff;color:#000">0,00</i><i style="background:#f3f3f3;color:#000">0,00</i><i style="background:#ffffff;color:#000">0,00</i><i style="background:#ffffff;color:#000">0,00</i><i style="background:#f3f3f3;color:#000">0,00</i><i style="background:#ffffff;color:#000">0,00</i><i style="background:#f3f3f3;color:#000">0,00</i><i style="background:#ffffff;color:#000">0,00</i><i style="background:#f3f3f3;color:#000">0,00</i><i style="background:#ffffff;color:#000">0,00</i><i style="background:#f3f3f3;color:#000">0,00</i><i style="background:#ffffff;color:#000">0,00</i><i style="background:#f3f3f3;color:#000">0,00</i><i style="background:#ffffff;color:#000">0,00</i><i style="background:#f3f3f3;color:#000">0,00</i><i style="background:#ffffff;color:#000">0,00</i><i style="background:#f3f3f3;color:#000">0,00</i><i style="background:#ffffff;color:#000">0,00</i><i style="background:#f3f3f3;color:#000">0,00</i><i style="background:#f3f3f3;color:#000">0,00</i><i style="background:#ffffff;color:#000">0,00</i><i style="background:#f3f3f3;color:#000">0,00</i><i style="background:#ffffff;color:#000">0,00</i><i style="background:#f3f3f3;color:#000">0,00</i><i style="background:#ffffff;color:#000">0,00</i><i style="background:#f3f3f3;color:#000">0,00</i><i style="background:#ffffff;color:#000">0,00</i><i style="background:#f3f3f3;color:#000">0,00</i><i style="background:#ffffff;color:#000">0,00</i><i style="background:#f3f3f3;color:#000">0,00</i><i style="background:#ffffff;color:#000">0,00</i><i style="background:#f3f3f3;color:#000">0,00</i><i style="background:#ffffff;color:#000">0,00</i><i style="background:#f3f3f3;color:#000">0,00</i><i style="background:#ffffff;color:#000">0,00</i><i style="background:#ffffff;color:#000">0,00</i><i style="background:#f3f3f3;color:#000">0,00</i><i style="background:#ffffff;color:#000">0,00</i><i style="background:#f3f3f3;color:#000">0,00</i><i style="background:#ffffff;color:#000">0,00</i><i style="background:#f3f3f3;color:#000">0,00</i><i style="background:#ffffff;color:#000">0,00</i><i style="background:#f3f3f3;color:#000">0,00</i><i style="background:#ffffff;color:#000">0,00</i><i style="background:#f3f3f3;color:#000">0,00</i><i style="background:#ffffff;color:#000">0,00</i><i style="background:#f3f3f3;color:#000">0,00</i><i style="background:#ffffff;color:#000">0,00</i><i style="background:#f3f3f3;color:#000">0,00</i><i style="background:#ffffff;color:#000">0,00</i><i style="background:#f3f3f3;color:#000">0,00</i><i style="background:#f3f3f3;color:#000">0,00</i><i style="background:#ffffff;color:#000">0,00</i><i style="background:#f3f3f3;color:#000">0,00</i><i style="background:#ffffff;color:#000">0,00</i><i style="background:#f3f3f3;color:#000">0,00</i><i style="background:#ffffff;color:#000">0,00</i><i style="background:#f3f3f3;color:#000">-0,08</i><i style="background:#ffffff;color:#000">-0,12</i><i style="background:#f3f3f3;color:#000">-0,12</i><i style="background:#ffffff;color:#000">-0,12</i><i style="background:#f3f3f3;color:#000">-0,12</i><i style="background:#ffffff;color:#000">-0,12</i><i style="background:#f3f3f3;color:#000">-0,12</i><i style="background:#ffffff;color:#000">-0,12</i><i style="background:#f3f3f3;color:#000">-0,12</i><i style="background:#ffffff;color:#000">-0,12</i><i style="background:#ffffff;color:#000">0,00</i><i style="background:#f3f3f3;color:#000">0,00</i><i style="background:#ffffff;color:#000">0,00</i><i style="background:#f3f3f3;color:#000">0,00</i><i style="background:#ffffff;color:#000">0,00</i><i style="background:#f3f3f3;color:#000">0,00</i><i style="background:#ffffff;color:#000">-0,08</i><i style="background:#f3f3f3;color:#000">-0,12</i><i style="background:#ffffff;color:#000">-0,12</i><i style="background:#f3f3f3;color:#000">-0,12</i><i style="background:#ffffff;color:#000">-0,12</i><i style="background:#f3f3f3;color:#000">-0,12</i><i style="background:#ffffff;color:#000">-0,12</i><i style="background:#f3f3f3;color:#000">-0,12</i><i style="background:#ffffff;color:#000">-0,12</i><i style="background:#f3f3f3;color:#000">-0,12</i><i style="background:#f3f3f3;color:#000">0,00</i><i style="background:#ffffff;color:#000">0,00</i><i style="background:#f3f3f3;color:#000">0,00</i><i style="background:#ffffff;color:#000">0,00</i><i style="background:#f3f3f3;color:#000">0,00</i><i style="background:#ffffff;color:#000">0,00</i><i style="background:#f3f3f3;color:#000">-0,08</i><i style="background:#ffffff;color:#000">-0,12</i><i style="background:#f3f3f3;color:#000">-0,12</i><i style="background:#ffffff;color:#000">-0,27</i><i style="background:#f3f3f3;color:#000">-0,27</i><i style="background:#ffffff;color:#000">-0,27</i><i style="background:#f3f3f3;color:#000">-0,27</i><i style="background:#ffffff;color:#000">-0,27</i><i style="background:#f3f3f3;color:#000">-0,27</i><i style="background:#ffffff;color:#000">-0,27</i><i style="background:#ffffff;color:#000">0,00</i><i style="background:#f3f3f3;color:#000">0,00</i><i style="background:#ffffff;color:#000">0,00</i><i style="background:#f3f3f3;color:#000">0,00</i><i style="background:#ffffff;color:#000">0,00</i><i style="background:#f3f3f3;color:#000">0,00</i><i style="background:#ffffff;color:#000">-0,08</i><i style="background:#f3f3f3;color:#000">-0,12</i><i style="background:#ffffff;color:#000">-0,12</i><i style="background:#f3f3f3;color:#000">-0,27</i><i style="background:#ffffff;color:#000">-0,35</i><i style="background:#f3f3f3;color:#000">-0,35</i><i style="background:#ffffff;color:#000">-0,35</i><i style="background:#f3f3f3;color:#000">-0,35</i><i style="background:#ffffff;color:#000">-0,35</i><i style="background:#f3f3f3;color:#000">-0,35</i><i style="background:#f3f3f3;color:#000">0,00</i><i style="background:#ffffff;color:#000">0,00</i><i style="background:#f3f3f3;color:#000">0,00</i><i style="background:#ffffff;color:#000">0,00</i><i style="background:#f3f3f3;color:#000">0,00</i><i style="background:#ffffff;color:#000">0,00</i><i style="background:#f3f3f3;color:#000">-0,08</i><i style="background:#ffffff;color:#000">-0,12</i><i style="background:#f3f3f3;color:#000">-0,12</i><i style="background:#ffffff;color:#000">-0,27</i><i style="background:#f3f3f3;color:#000">-0,35</i><i style="background:#ffffff;color:#000">-0,35</i><i style="background:#f3f3f3;color:#000">-0,35</i><i style="background:#ffffff;color:#000">-0,35</i><i style="background:#f3f3f3;color:#000">-0,35</i><i style="background:#ffffff;color:#000">-0,35</i><i style="background:#ffffff;color:#000">0,00</i><i style="background:#f3f3f3;color:#000">0,00</i><i style="background:#ffffff;color:#000">0,00</i><i style="background:#f3f3f3;color:#000">0,00</i><i style="background:#ffffff;color:#000">0,00</i><i style="background:#f3f3f3;color:#000">0,00</i><i style="background:#ffffff;color:#000">-0,08</i><i style="background:#f3f3f3;color:#000">-0,12</i><i style="background:#ffffff;color:#000">-0,12</i><i style="background:#f3f3f3;color:#000">-0,27</i><i style="background:#ffffff;color:#000">-0,35</i><i style="background:#f3f3f3;color:#000">-0,35</i><i style="background:#ffffff;color:#000">-0,35</i><i style="background:#f3f3f3;color:#000">-0,35</i><i style="background:#ffffff;color:#000">-0,35</i><i style="background:#f3f3f3;color:#000">-0,35</i><i style="background:#f3f3f3;color:#000">0,00</i><i style="background:#ffffff;color:#000">0,00</i><i style="background:#f3f3f3;color:#000">0,00</i><i style="background:#ffffff;color:#000">0,00</i><i style="background:#f3f3f3;color:#000">0,00</i><i style="background:#ffffff;color:#000">0,00</i><i style="background:#f3f3f3;color:#000">-0,08</i><i style="background:#ffffff;color:#000">-0,12</i><i style="background:#f3f3f3;color:#000">-0,12</i><i style="background:#ffffff;color:#000">-0,27</i><i style="background:#f3f3f3;color:#000">-0,35</i><i style="background:#ffffff;color:#000">-0,35</i><i style="background:#f3f3f3;color:#000">-0,35</i><i style="background:#ffffff;color:#000">-0,35</i><i style="background:#f3f3f3;color:#000">-0,35</i><i style="background:#ffffff;color:#000">-0,35</i><i style="background:#ffffff;color:#000">0,00</i><i style="background:#f3f3f3;color:#000">0,00</i><i style="background:#ffffff;color:#000">0,00</i><i style="background:#f3f3f3;color:#000">0,00</i><i style="background:#ffffff;color:#000">0,00</i><i style="background:#f3f3f3;color:#000">0,00</i><i style="background:#ffffff;color:#000">-0,08</i><i style="background:#f3f3f3;color:#000">-0,12</i><i style="background:#ffffff;color:#000">-0,12</i><i style="background:#f3f3f3;color:#000">-0,27</i><i style="background:#ffffff;color:#000">-0,35</i><i style="background:#f3f3f3;color:#000">-0,35</i><i style="background:#ffffff;color:#000">-0,35</i><i style="background:#f3f3f3;color:#000">-0,35</i><i style="background:#ffffff;color:#000">-0,35</i><i style="background:#f3f3f3;color:#000">-0,35</i><i style="background:#f3f3f3;color:#000">0,00</i><i style="background:#ffffff;color:#000">0,00</i><i style="background:#f3f3f3;color:#000">0,00</i><i style="background:#ffffff;color:#000">0,00</i><i style="background:#f3f3f3;color:#000">0,00</i><i style="background:#ffffff;color:#000">0,00</i><i style="background:#f3f3f3;color:#000">-0,08</i><i style="background:#ffffff;color:#000">-0,12</i><i style="background:#f3f3f3;color:#000">-0,12</i><i style="background:#ffffff;color:#000">-0,27</i><i style="background:#f3f3f3;color:#000">-0,35</i><i style="background:#ffffff;color:#000">-0,35</i><i style="background:#f3f3f3;color:#000">-0,35</i><i style="background:#ffffff;color:#000">-0,35</i><i style="background:#f3f3f3;color:#000">-0,35</i><i style="background:#ffffff;color:#000">-0,35</i><i style="background:#ffffff;color:#000">0,00</i><i style="background:#f3f3f3;color:#000">0,00</i><i style="background:#ffffff;color:#000">0,00</i><i style="background:#f3f3f3;color:#000">0,00</i><i style="background:#ffffff;color:#000">0,00</i><i style="background:#f3f3f3;color:#000">0,00</i><i style="background:#ffffff;color:#000">-0,08</i><i style="background:#f3f3f3;color:#000">-0,12</i><i style="background:#ffffff;color:#000">-0,12</i><i style="background:#f3f3f3;color:#000">-0,27</i><i style="background:#ffffff;color:#000">-0,35</i><i style="background:#f3f3f3;color:#000">-0,35</i><i style="background:#ffffff;color:#000">-0,35</i><i style="background:#f3f3f3;color:#000">-0,35</i><i style="background:#ffffff;color:#000">-0,35</i><i style="background:#f3f3f3;color:#000">-0,35</i><i style="background:#f3f3f3;color:#000">0,00</i><i style="background:#ffffff;color:#000">0,00</i><i style="background:#f3f3f3;color:#000">0,00</i><i style="background:#ffffff;color:#000">0,00</i><i style="background:#f3f3f3;color:#000">0,00</i><i style="background:#ffffff;color:#000">0,00</i><i style="background:#f3f3f3;color:#000">-0,08</i><i style="background:#ffffff;color:#000">-0,12</i><i style="background:#f3f3f3;color:#000">-0,12</i><i style="background:#ffffff;color:#000">-0,27</i><i style="background:#f3f3f3;color:#000">-0,35</i><i style="background:#ffffff;color:#000">-0,35</i><i style="background:#f3f3f3;color:#000">-0,35</i><i style="background:#ffffff;color:#000">-0,35</i><i style="background:#f3f3f3;color:#000">-0,35</i><i style="background:#ffffff;color:#000">-0,35</i></div>
<div style="left:450px;top:572px;width:24px;height:23px;border:1px dotted #000;box-sizing:border-box;"></div>
<div style="left:451px;top:572px;width:22px;height:22px;border:1px solid #000;box-sizing:border-box;"></div>
<div style="left:847px;top:547px;width:429px;height:21px;background:#a7a5a8;"></div>
<div style="left:848px;top:548px;width:50px;height:20px;background:#fff;box-shadow:-1px 0 0 #d8dade,0 -1px 0 #d8dade;"></div>
<span style="left:852.0px;top:551.0px;font-size:10.8px;line-height:13px;color:#1c1c22;transform:scaleX(0.918);transform-origin:0 50%;">Graph 3D</span>
<div style="left:847px;top:568px;width:429px;height:395px;background:#ccd0d8;"></div>
<div style="left:847px;top:568px;width:3px;height:395px;background:#aeb3c0;"></div>
<div style="left:850px;top:571px;width:426px;height:392px;background:#000;"></div>
<div style="left:851px;top:572px;width:425px;height:391px;background:#fff;"></div>
<!-- 3d graph -->
<svg style="left:852px;top:573px" width="423" height="389" viewBox="852 573 423 389" font-family="Liberation Sans, sans-serif"><polygon points="980.7,796.7 1213.0,827.6 1213.0,621.4 980.7,590.5" fill="#d9d9e4"/><polygon points="980.7,796.7 919.2,913.0 919.2,706.8 980.7,590.5" fill="#dddde9"/><polygon points="980.7,796.7 1213.0,827.6 1151.5,943.9 919.2,913.0" fill="#e3e3f1"/><polygon points="1213.0,827.6 1151.5,943.9 1151.5,737.6 1213.0,621.4" fill="#c7c7d0"/><polygon points="919.2,913.0 1151.5,943.9 1151.5,737.6 919.2,706.8" fill="rgba(240,240,255,.45)"/><line x1="980.7" y1="796.7" x2="980.7" y2="590.5" stroke="#a6a6b2" stroke-width="1"/><line x1="980.7" y1="796.7" x2="1213.0" y2="827.6" stroke="#a6a6b2" stroke-width="1"/><line x1="980.7" y1="796.7" x2="919.2" y2="913.0" stroke="#a6a6b2" stroke-width="1"/><polygon points="980.7,645.5 996.2,647.5 992.1,655.3 976.6,653.2" fill="rgb(200,226,200)" stroke="#0b1a0b" stroke-width="1" stroke-linejoin="round"/><polygon points="996.2,647.5 1011.7,649.6 1007.6,657.3 992.1,655.3" fill="rgb(200,226,200)" stroke="#0b1a0b" stroke-width="1" stroke-linejoin="round"/><polygon points="1011.7,649.6 1027.2,651.6 1023.1,659.4 1007.6,657.3" fill="rgb(200,226,200)" stroke="#0b1a0b" stroke-width="1" stroke-linejoin="round"/><polygon points="1027.2,651.6 1042.6,653.7 1038.5,661.4 1023.1,659.4" fill="rgb(200,226,200)" stroke="#0b1a0b" stroke-width="1" stroke-linejoin="round"/><polygon points="1042.6,653.7 1058.1,655.8 1054.0,663.5 1038.5,661.4" fill="rgb(200,226,200)" stroke="#0b1a0b" stroke-width="1" stroke-linejoin="round"/><polygon points="1058.1,655.8 1073.6,657.8 1069.5,665.6 1054.0,663.5" fill="rgb(200,226,200)" stroke="#0b1a0b" stroke-width="1" stroke-linejoin="round"/><polygon points="1073.6,657.8 1089.1,659.9 1085.0,667.6 1069.5,665.6" fill="rgb(200,226,200)" stroke="#0b1a0b" stroke-width="1" stroke-linejoin="round"/><polygon points="1089.1,659.9 1104.6,661.9 1100.5,669.7 1085.0,667.6" fill="rgb(200,226,200)" stroke="#0b1a0b" stroke-width="1" stroke-linejoin="round"/><polygon points="1104.6,661.9 1120.1,664.0 1116.0,671.7 1100.5,669.7" fill="rgb(200,226,200)" stroke="#0b1a0b" stroke-width="1" stroke-linejoin="round"/><polygon points="1120.1,664.0 1135.6,666.1 1131.5,673.8 1116.0,671.7" fill="rgb(200,226,200)" stroke="#0b1a0b" stroke-width="1" stroke-linejoin="round"/><polygon points="1135.6,666.1 1151.1,668.1 1147.0,675.9 1131.5,673.8" fill="rgb(200,226,200)" stroke="#0b1a0b" stroke-width="1" stroke-linejoin="round"/><polygon points="1151.1,668.1 1166.5,670.2 1162.4,677.9 1147.0,675.9" fill="rgb(200,226,200)" stroke="#0b1a0b" stroke-width="1" stroke-linejoin="round"/><polygon points="1166.5,670.2 1182.0,672.2 1177.9,680.0 1162.4,677.9" fill="rgb(200,226,200)" stroke="#0b1a0b" stroke-width="1" stroke-linejoin="round"/><polygon points="1182.0,672.2 1197.5,674.3 1193.4,682.0 1177.9,680.0" fill="rgb(200,226,200)" stroke="#0b1a0b" stroke-width="1" stroke-linejoin="round"/><polygon points="1197.5,674.3 1213.0,676.4 1208.9,684.1 1193.4,682.0" fill="rgb(200,226,200)" stroke="#0b1a0b" stroke-width="1" stroke-linejoin="round"/><polygon points="976.6,653.2 992.1,655.3 988.0,663.0 972.5,661.0" fill="rgb(200,226,200)" stroke="#0b1a0b" stroke-width="1" stroke-linejoin="round"/><polygon points="992.1,655.3 1007.6,657.3 1003.5,665.1 988.0,663.0" fill="rgb(200,226,200)" stroke="#0b1a0b" stroke-width="1" stroke-linejoin="round"/><polygon points="1007.6,657.3 1023.1,659.4 1019.0,667.1 1003.5,665.1" fill="rgb(200,226,200)" stroke="#0b1a0b" stroke-width="1" stroke-linejoin="round"/><polygon points="1023.1,659.4 1038.5,661.4 1034.4,669.2 1019.0,667.1" fill="rgb(200,226,200)" stroke="#0b1a0b" stroke-width="1" stroke-linejoin="round"/><polygon points="1038.5,661.4 1054.0,663.5 1049.9,671.3 1034.4,669.2" fill="rgb(200,226,200)" stroke="#0b1a0b" stroke-width="1" stroke-linejoin="round"/><polygon points="1054.0,663.5 1069.5,665.6 1065.4,673.3 1049.9,671.3" fill="rgb(200,226,200)" stroke="#0b1a0b" stroke-width="1" stroke-linejoin="round"/><polygon points="1069.5,665.6 1085.0,667.6 1080.9,675.4 1065.4,673.3" fill="rgb(200,226,200)" stroke="#0b1a0b" stroke-width="1" stroke-linejoin="round"/><polygon points="1085.0,667.6 1100.5,669.7 1096.4,677.4 1080.9,675.4" fill="rgb(200,226,200)" stroke="#0b1a0b" stroke-width="1" stroke-linejoin="round"/><polygon points="1100.5,669.7 1116.0,671.7 1111.9,679.5 1096.4,677.4" fill="rgb(200,226,200)" stroke="#0b1a0b" stroke-width="1" stroke-linejoin="round"/><polygon points="1116.0,671.7 1131.5,673.8 1127.4,681.6 1111.9,679.5" fill="rgb(200,226,200)" stroke="#0b1a0b" stroke-width="1" stroke-linejoin="round"/><polygon points="1131.5,673.8 1147.0,675.9 1142.9,683.6 1127.4,681.6" fill="rgb(200,226,200)" stroke="#0b1a0b" stroke-width="1" stroke-linejoin="round"/><polygon points="1147.0,675.9 1162.4,677.9 1158.3,685.7 1142.9,683.6" fill="rgb(200,226,200)" stroke="#0b1a0b" stroke-width="1" stroke-linejoin="round"/><polygon points="1162.4,677.9 1177.9,680.0 1173.8,687.7 1158.3,685.7" fill="rgb(200,226,200)" stroke="#0b1a0b" stroke-width="1" stroke-linejoin="round"/><polygon points="1177.9,680.0 1193.4,682.0 1189.3,689.8 1173.8,687.7" fill="rgb(200,226,200)" stroke="#0b1a0b" stroke-width="1" stroke-linejoin="round"/><polygon points="1193.4,682.0 1208.9,684.1 1204.8,691.9 1189.3,689.8" fill="rgb(200,226,200)" stroke="#0b1a0b" stroke-width="1" stroke-linejoin="round"/><polygon points="972.5,661.0 988.0,663.0 983.9,670.8 968.4,668.7" fill="rgb(200,226,200)" stroke="#0b1a0b" stroke-width="1" stroke-linejoin="round"/><polygon points="988.0,663.0 1003.5,665.1 999.4,672.8 983.9,670.8" fill="rgb(200,226,200)" stroke="#0b1a0b" stroke-width="1" stroke-linejoin="round"/><polygon points="1003.5,665.1 1019.0,667.1 1014.9,674.9 999.4,672.8" fill="rgb(200,226,200)" stroke="#0b1a0b" stroke-width="1" stroke-linejoin="round"/><polygon points="1019.0,667.1 1034.4,669.2 1030.3,677.0 1014.9,674.9" fill="rgb(200,226,200)" stroke="#0b1a0b" stroke-width="1" stroke-linejoin="round"/><polygon points="1034.4,669.2 1049.9,671.3 1045.8,679.0 1030.3,677.0" fill="rgb(200,226,200)" stroke="#0b1a0b" stroke-width="1" stroke-linejoin="round"/><polygon points="1049.9,671.3 1065.4,673.3 1061.3,681.1 1045.8,679.0" fill="rgb(200,226,200)" stroke="#0b1a0b" stroke-width="1" stroke-linejoin="round"/><polygon points="1065.4,673.3 1080.9,675.4 1076.8,683.1 1061.3,681.1" fill="rgb(200,226,200)" stroke="#0b1a0b" stroke-width="1" stroke-linejoin="round"/><polygon points="1080.9,675.4 1096.4,677.4 1092.3,685.2 1076.8,683.1" fill="rgb(200,226,200)" stroke="#0b1a0b" stroke-width="1" stroke-linejoin="round"/><polygon points="1096.4,677.4 1111.9,679.5 1107.8,687.2 1092.3,685.2" fill="rgb(200,226,200)" stroke="#0b1a0b" stroke-width="1" stroke-linejoin="round"/><polygon points="1111.9,679.5 1127.4,681.6 1123.3,689.3 1107.8,687.2" fill="rgb(200,226,200)" stroke="#0b1a0b" stroke-width="1" stroke-linejoin="round"/><polygon points="1127.4,681.6 1142.9,683.6 1138.8,691.4 1123.3,689.3" fill="rgb(200,226,200)" stroke="#0b1a0b" stroke-width="1" stroke-linejoin="round"/><polygon points="1142.9,683.6 1158.3,685.7 1154.2,693.4 1138.8,691.4" fill="rgb(200,226,200)" stroke="#0b1a0b" stroke-width="1" stroke-linejoin="round"/><polygon points="1158.3,685.7 1173.8,687.7 1169.7,695.5 1154.2,693.4" fill="rgb(200,226,200)" stroke="#0b1a0b" stroke-width="1" stroke-linejoin="round"/><polygon points="1173.8,687.7 1189.3,689.8 1185.2,697.6 1169.7,695.5" fill="rgb(200,226,200)" stroke="#0b1a0b" stroke-width="1" stroke-linejoin="round"/><polygon points="1189.3,689.8 1204.8,691.9 1200.7,699.6 1185.2,697.6" fill="rgb(200,226,200)" stroke="#0b1a0b" stroke-width="1" stroke-linejoin="round"/><polygon points="968.4,668.7 983.9,670.8 979.8,678.5 964.3,676.5" fill="rgb(200,226,200)" stroke="#0b1a0b" stroke-width="1" stroke-linejoin="round"/><polygon points="983.9,670.8 999.4,672.8 995.3,680.6 979.8,678.5" fill="rgb(200,226,200)" stroke="#0b1a0b" stroke-width="1" stroke-linejoin="round"/><polygon points="999.4,672.8 1014.9,674.9 1010.8,682.6 995.3,680.6" fill="rgb(200,226,200)" stroke="#0b1a0b" stroke-width="1" stroke-linejoin="round"/><polygon points="1014.9,674.9 1030.3,677.0 1026.2,684.7 1010.8,682.6" fill="rgb(200,226,200)" stroke="#0b1a0b" stroke-width="1" stroke-linejoin="round"/><polygon points="1030.3,677.0 1045.8,679.0 1041.7,686.8 1026.2,684.7" fill="rgb(200,226,200)" stroke="#0b1a0b" stroke-width="1" stroke-linejoin="round"/><polygon points="1045.8,679.0 1061.3,681.1 1057.2,688.8 1041.7,686.8" fill="rgb(200,226,200)" stroke="#0b1a0b" stroke-width="1" stroke-linejoin="round"/><polygon points="1061.3,681.1 1076.8,683.1 1072.7,690.9 1057.2,688.8" fill="rgb(200,226,200)" stroke="#0b1a0b" stroke-width="1" stroke-linejoin="round"/><polygon points="1076.8,683.1 1092.3,685.2 1088.2,692.9 1072.7,690.9" fill="rgb(200,226,200)" stroke="#0b1a0b" stroke-width="1" stroke-linejoin="round"/><polygon points="1092.3,685.2 1107.8,687.2 1103.7,695.0 1088.2,692.9" fill="rgb(200,226,200)" stroke="#0b1a0b" stroke-width="1" stroke-linejoin="round"/><polygon points="1107.8,687.2 1123.3,689.3 1119.2,697.1 1103.7,695.0" fill="rgb(200,226,200)" stroke="#0b1a0b" stroke-width="1" stroke-linejoin="round"/><polygon points="1123.3,689.3 1138.8,691.4 1134.7,699.1 1119.2,697.1" fill="rgb(200,226,200)" stroke="#0b1a0b" stroke-width="1" stroke-linejoin="round"/><polygon points="1138.8,691.4 1154.2,693.4 1150.1,701.2 1134.7,699.1" fill="rgb(200,226,200)" stroke="#0b1a0b" stroke-width="1" stroke-linejoin="round"/><polygon points="1154.2,693.4 1169.7,695.5 1165.6,703.2 1150.1,701.2" fill="rgb(200,226,200)" stroke="#0b1a0b" stroke-width="1" stroke-linejoin="round"/><polygon points="1169.7,695.5 1185.2,697.6 1181.1,705.3 1165.6,703.2" fill="rgb(200,226,200)" stroke="#0b1a0b" stroke-width="1" stroke-linejoin="round"/><polygon points="1185.2,697.6 1200.7,699.6 1196.6,707.4 1181.1,705.3" fill="rgb(200,226,200)" stroke="#0b1a0b" stroke-width="1" stroke-linejoin="round"/><polygon points="964.3,676.5 979.8,678.5 975.7,686.3 960.2,684.2" fill="rgb(200,226,200)" stroke="#0b1a0b" stroke-width="1" stroke-linejoin="round"/><polygon points="979.8,678.5 995.3,680.6 991.2,688.3 975.7,686.3" fill="rgb(200,226,200)" stroke="#0b1a0b" stroke-width="1" stroke-linejoin="round"/><polygon points="995.3,680.6 1010.8,682.6 1006.7,690.4 991.2,688.3" fill="rgb(200,226,200)" stroke="#0b1a0b" stroke-width="1" stroke-linejoin="round"/><polygon points="1010.8,682.6 1026.2,684.7 1022.1,692.5 1006.7,690.4" fill="rgb(200,226,200)" stroke="#0b1a0b" stroke-width="1" stroke-linejoin="round"/><polygon points="1026.2,684.7 1041.7,686.8 1037.6,694.5 1022.1,692.5" fill="rgb(200,226,200)" stroke="#0b1a0b" stroke-width="1" stroke-linejoin="round"/><polygon points="1041.7,686.8 1057.2,688.8 1053.1,718.6 1037.6,694.5" fill="rgb(199,225,200)" stroke="#0b1a0b" stroke-width="1" stroke-linejoin="round"/><polygon points="1057.2,688.8 1072.7,690.9 1068.6,731.6 1053.1,718.6" fill="rgb(198,225,201)" stroke="#0b1a0b" stroke-width="1" stroke-linejoin="round"/><polygon points="1072.7,690.9 1088.2,692.9 1084.1,733.7 1068.6,731.6" fill="rgb(197,224,201)" stroke="#0b1a0b" stroke-width="1" stroke-linejoin="round"/><polygon points="1088.2,692.9 1103.7,695.0 1099.6,735.8 1084.1,733.7" fill="rgb(197,224,201)" stroke="#0b1a0b" stroke-width="1" stroke-linejoin="round"/><polygon points="1103.7,695.0 1119.2,697.1 1115.1,737.8 1099.6,735.8" fill="rgb(197,224,201)" stroke="#0b1a0b" stroke-width="1" stroke-linejoin="round"/><polygon points="1119.2,697.1 1134.7,699.1 1130.6,739.9 1115.1,737.8" fill="rgb(197,224,201)" stroke="#0b1a0b" stroke-width="1" stroke-linejoin="round"/><polygon points="1134.7,699.1 1150.1,701.2 1146.0,741.9 1130.6,739.9" fill="rgb(197,224,201)" stroke="#0b1a0b" stroke-width="1" stroke-linejoin="round"/><polygon points="1150.1,701.2 1165.6,703.2 1161.5,744.0 1146.0,741.9" fill="rgb(197,224,201)" stroke="#0b1a0b" stroke-width="1" stroke-linejoin="round"/><polygon points="1165.6,703.2 1181.1,705.3 1177.0,746.1 1161.5,744.0" fill="rgb(197,224,201)" stroke="#0b1a0b" stroke-width="1" stroke-linejoin="round"/><polygon points="1181.1,705.3 1196.6,707.4 1192.5,748.1 1177.0,746.1" fill="rgb(197,224,201)" stroke="#0b1a0b" stroke-width="1" stroke-linejoin="round"/><polygon points="960.2,684.2 975.7,686.3 971.6,694.0 956.1,692.0" fill="rgb(200,226,200)" stroke="#0b1a0b" stroke-width="1" stroke-linejoin="round"/><polygon points="975.7,686.3 991.2,688.3 987.1,696.1 971.6,694.0" fill="rgb(200,226,200)" stroke="#0b1a0b" stroke-width="1" stroke-linejoin="round"/><polygon points="991.2,688.3 1006.7,690.4 1002.6,698.1 987.1,696.1" fill="rgb(200,226,200)" stroke="#0b1a0b" stroke-width="1" stroke-linejoin="round"/><polygon points="1006.7,690.4 1022.1,692.5 1018.0,700.2 1002.6,698.1" fill="rgb(200,226,200)" stroke="#0b1a0b" stroke-width="1" stroke-linejoin="round"/><polygon points="1022.1,692.5 1037.6,694.5 1033.5,702.3 1018.0,700.2" fill="rgb(200,226,200)" stroke="#0b1a0b" stroke-width="1" stroke-linejoin="round"/><polygon points="1037.6,694.5 1053.1,718.6 1049.0,726.3 1033.5,702.3" fill="rgb(198,225,200)" stroke="#0b1a0b" stroke-width="1" stroke-linejoin="round"/><polygon points="1053.1,718.6 1068.6,731.6 1064.5,739.4 1049.0,726.3" fill="rgb(195,223,201)" stroke="#0b1a0b" stroke-width="1" stroke-linejoin="round"/><polygon points="1068.6,731.6 1084.1,733.7 1080.0,741.5 1064.5,739.4" fill="rgb(195,223,201)" stroke="#0b1a0b" stroke-width="1" stroke-linejoin="round"/><polygon points="1084.1,733.7 1099.6,735.8 1095.5,743.5 1080.0,741.5" fill="rgb(195,223,201)" stroke="#0b1a0b" stroke-width="1" stroke-linejoin="round"/><polygon points="1099.6,735.8 1115.1,737.8 1111.0,745.6 1095.5,743.5" fill="rgb(195,223,201)" stroke="#0b1a0b" stroke-width="1" stroke-linejoin="round"/><polygon points="1115.1,737.8 1130.6,739.9 1126.5,747.6 1111.0,745.6" fill="rgb(195,223,201)" stroke="#0b1a0b" stroke-width="1" stroke-linejoin="round"/><polygon points="1130.6,739.9 1146.0,741.9 1141.9,749.7 1126.5,747.6" fill="rgb(195,223,201)" stroke="#0b1a0b" stroke-width="1" stroke-linejoin="round"/><polygon points="1146.0,741.9 1161.5,744.0 1157.4,751.8 1141.9,749.7" fill="rgb(195,223,201)" stroke="#0b1a0b" stroke-width="1" stroke-linejoin="round"/><polygon points="1161.5,744.0 1177.0,746.1 1172.9,753.8 1157.4,751.8" fill="rgb(195,223,201)" stroke="#0b1a0b" stroke-width="1" stroke-linejoin="round"/><polygon points="1177.0,746.1 1192.5,748.1 1188.4,755.9 1172.9,753.8" fill="rgb(195,223,201)" stroke="#0b1a0b" stroke-width="1" stroke-linejoin="round"/><polygon points="956.1,692.0 971.6,694.0 967.5,701.8 952.0,699.7" fill="rgb(200,226,200)" stroke="#0b1a0b" stroke-width="1" stroke-linejoin="round"/><polygon points="971.6,694.0 987.1,696.1 983.0,703.8 967.5,701.8" fill="rgb(200,226,200)" stroke="#0b1a0b" stroke-width="1" stroke-linejoin="round"/><polygon points="987.1,696.1 1002.6,698.1 998.5,705.9 983.0,703.8" fill="rgb(200,226,200)" stroke="#0b1a0b" stroke-width="1" stroke-linejoin="round"/><polygon points="1002.6,698.1 1018.0,700.2 1013.9,708.0 998.5,705.9" fill="rgb(200,226,200)" stroke="#0b1a0b" stroke-width="1" stroke-linejoin="round"/><polygon points="1018.0,700.2 1033.5,702.3 1029.4,710.0 1013.9,708.0" fill="rgb(200,226,200)" stroke="#0b1a0b" stroke-width="1" stroke-linejoin="round"/><polygon points="1033.5,702.3 1049.0,726.3 1044.9,734.1 1029.4,710.0" fill="rgb(198,225,200)" stroke="#0b1a0b" stroke-width="1" stroke-linejoin="round"/><polygon points="1049.0,726.3 1064.5,739.4 1060.4,747.1 1044.9,734.1" fill="rgb(195,223,201)" stroke="#0b1a0b" stroke-width="1" stroke-linejoin="round"/><polygon points="1064.5,739.4 1080.0,741.5 1075.9,749.2 1060.4,747.1" fill="rgb(195,223,201)" stroke="#0b1a0b" stroke-width="1" stroke-linejoin="round"/><polygon points="1080.0,741.5 1095.5,743.5 1091.4,792.5 1075.9,749.2" fill="rgb(193,222,202)" stroke="#0b1a0b" stroke-width="1" stroke-linejoin="round"/><polygon points="1095.5,743.5 1111.0,745.6 1106.9,794.6 1091.4,792.5" fill="rgb(191,220,202)" stroke="#0b1a0b" stroke-width="1" stroke-linejoin="round"/><polygon points="1111.0,745.6 1126.5,747.6 1122.4,796.6 1106.9,794.6" fill="rgb(191,220,202)" stroke="#0b1a0b" stroke-width="1" stroke-linejoin="round"/><polygon points="1126.5,747.6 1141.9,749.7 1137.8,798.7 1122.4,796.6" fill="rgb(191,220,202)" stroke="#0b1a0b" stroke-width="1" stroke-linejoin="round"/><polygon points="1141.9,749.7 1157.4,751.8 1153.3,800.8 1137.8,798.7" fill="rgb(191,220,202)" stroke="#0b1a0b" stroke-width="1" stroke-linejoin="round"/><polygon points="1157.4,751.8 1172.9,753.8 1168.8,802.8 1153.3,800.8" fill="rgb(191,220,202)" stroke="#0b1a0b" stroke-width="1" stroke-linejoin="round"/><polygon points="1172.9,753.8 1188.4,755.9 1184.3,804.9 1168.8,802.8" fill="rgb(191,220,202)" stroke="#0b1a0b" stroke-width="1" stroke-linejoin="round"/><polygon points="952.0,699.7 967.5,701.8 963.4,709.5 947.9,707.5" fill="rgb(200,226,200)" stroke="#0b1a0b" stroke-width="1" stroke-linejoin="round"/><polygon points="967.5,701.8 983.0,703.8 978.9,711.6 963.4,709.5" fill="rgb(200,226,200)" stroke="#0b1a0b" stroke-width="1" stroke-linejoin="round"/><polygon points="983.0,703.8 998.5,705.9 994.4,713.7 978.9,711.6" fill="rgb(200,226,200)" stroke="#0b1a0b" stroke-width="1" stroke-linejoin="round"/><polygon points="998.5,705.9 1013.9,708.0 1009.8,715.7 994.4,713.7" fill="rgb(200,226,200)" stroke="#0b1a0b" stroke-width="1" stroke-linejoin="round"/><polygon points="1013.9,708.0 1029.4,710.0 1025.3,717.8 1009.8,715.7" fill="rgb(200,226,200)" stroke="#0b1a0b" stroke-width="1" stroke-linejoin="round"/><polygon points="1029.4,710.0 1044.9,734.1 1040.8,741.8 1025.3,717.8" fill="rgb(198,225,200)" stroke="#0b1a0b" stroke-width="1" stroke-linejoin="round"/><polygon points="1044.9,734.1 1060.4,747.1 1056.3,754.9 1040.8,741.8" fill="rgb(195,223,201)" stroke="#0b1a0b" stroke-width="1" stroke-linejoin="round"/><polygon points="1060.4,747.1 1075.9,749.2 1071.8,757.0 1056.3,754.9" fill="rgb(195,223,201)" stroke="#0b1a0b" stroke-width="1" stroke-linejoin="round"/><polygon points="1075.9,749.2 1091.4,792.5 1087.3,800.3 1071.8,757.0" fill="rgb(191,220,202)" stroke="#0b1a0b" stroke-width="1" stroke-linejoin="round"/><polygon points="1091.4,792.5 1106.9,794.6 1102.8,824.3 1087.3,800.3" fill="rgb(187,218,203)" stroke="#0b1a0b" stroke-width="1" stroke-linejoin="round"/><polygon points="1106.9,794.6 1122.4,796.6 1118.3,826.4 1102.8,824.3" fill="rgb(186,217,204)" stroke="#0b1a0b" stroke-width="1" stroke-linejoin="round"/><polygon points="1122.4,796.6 1137.8,798.7 1133.7,828.4 1118.3,826.4" fill="rgb(186,217,204)" stroke="#0b1a0b" stroke-width="1" stroke-linejoin="round"/><polygon points="1137.8,798.7 1153.3,800.8 1149.2,830.5 1133.7,828.4" fill="rgb(186,217,204)" stroke="#0b1a0b" stroke-width="1" stroke-linejoin="round"/><polygon points="1153.3,800.8 1168.8,802.8 1164.7,832.6 1149.2,830.5" fill="rgb(186,217,204)" stroke="#0b1a0b" stroke-width="1" stroke-linejoin="round"/><polygon points="1168.8,802.8 1184.3,804.9 1180.2,834.6 1164.7,832.6" fill="rgb(186,217,204)" stroke="#0b1a0b" stroke-width="1" stroke-linejoin="round"/><polygon points="947.9,707.5 963.4,709.5 959.3,717.3 943.8,715.2" fill="rgb(200,226,200)" stroke="#0b1a0b" stroke-width="1" stroke-linejoin="round"/><polygon points="963.4,709.5 978.9,711.6 974.8,719.4 959.3,717.3" fill="rgb(200,226,200)" stroke="#0b1a0b" stroke-width="1" stroke-linejoin="round"/><polygon points="978.9,711.6 994.4,713.7 990.3,721.4 974.8,719.4" fill="rgb(200,226,200)" stroke="#0b1a0b" stroke-width="1" stroke-linejoin="round"/><polygon points="994.4,713.7 1009.8,715.7 1005.7,723.5 990.3,721.4" fill="rgb(200,226,200)" stroke="#0b1a0b" stroke-width="1" stroke-linejoin="round"/><polygon points="1009.8,715.7 1025.3,717.8 1021.2,725.5 1005.7,723.5" fill="rgb(200,226,200)" stroke="#0b1a0b" stroke-width="1" stroke-linejoin="round"/><polygon points="1025.3,717.8 1040.8,741.8 1036.7,749.6 1021.2,725.5" fill="rgb(198,225,200)" stroke="#0b1a0b" stroke-width="1" stroke-linejoin="round"/><polygon points="1040.8,741.8 1056.3,754.9 1052.2,762.6 1036.7,749.6" fill="rgb(195,223,201)" stroke="#0b1a0b" stroke-width="1" stroke-linejoin="round"/><polygon points="1056.3,754.9 1071.8,757.0 1067.7,764.7 1052.2,762.6" fill="rgb(195,223,201)" stroke="#0b1a0b" stroke-width="1" stroke-linejoin="round"/><polygon points="1071.8,757.0 1087.3,800.3 1083.2,808.0 1067.7,764.7" fill="rgb(191,220,202)" stroke="#0b1a0b" stroke-width="1" stroke-linejoin="round"/><polygon points="1087.3,800.3 1102.8,824.3 1098.7,832.1 1083.2,808.0" fill="rgb(186,217,204)" stroke="#0b1a0b" stroke-width="1" stroke-linejoin="round"/><polygon points="1102.8,824.3 1118.3,826.4 1114.2,834.1 1098.7,832.1" fill="rgb(184,216,204)" stroke="#0b1a0b" stroke-width="1" stroke-linejoin="round"/><polygon points="1118.3,826.4 1133.7,828.4 1129.6,836.2 1114.2,834.1" fill="rgb(184,216,204)" stroke="#0b1a0b" stroke-width="1" stroke-linejoin="round"/><polygon points="1133.7,828.4 1149.2,830.5 1145.1,838.3 1129.6,836.2" fill="rgb(184,216,204)" stroke="#0b1a0b" stroke-width="1" stroke-linejoin="round"/><polygon points="1149.2,830.5 1164.7,832.6 1160.6,840.3 1145.1,838.3" fill="rgb(184,216,204)" stroke="#0b1a0b" stroke-width="1" stroke-linejoin="round"/><polygon points="1164.7,832.6 1180.2,834.6 1176.1,842.4 1160.6,840.3" fill="rgb(184,216,204)" stroke="#0b1a0b" stroke-width="1" stroke-linejoin="round"/><polygon points="943.8,715.2 959.3,717.3 955.2,725.0 939.7,723.0" fill="rgb(200,226,200)" stroke="#0b1a0b" stroke-width="1" stroke-linejoin="round"/><polygon points="959.3,717.3 974.8,719.4 970.7,727.1 955.2,725.0" fill="rgb(200,226,200)" stroke="#0b1a0b" stroke-width="1" stroke-linejoin="round"/><polygon points="974.8,719.4 990.3,721.4 986.2,729.2 970.7,727.1" fill="rgb(200,226,200)" stroke="#0b1a0b" stroke-width="1" stroke-linejoin="round"/><polygon points="990.3,721.4 1005.7,723.5 1001.6,731.2 986.2,729.2" fill="rgb(200,226,200)" stroke="#0b1a0b" stroke-width="1" stroke-linejoin="round"/><polygon points="1005.7,723.5 1021.2,725.5 1017.1,733.3 1001.6,731.2" fill="rgb(200,226,200)" stroke="#0b1a0b" stroke-width="1" stroke-linejoin="round"/><polygon points="1021.2,725.5 1036.7,749.6 1032.6,757.3 1017.1,733.3" fill="rgb(198,225,200)" stroke="#0b1a0b" stroke-width="1" stroke-linejoin="round"/><polygon points="1036.7,749.6 1052.2,762.6 1048.1,770.4 1032.6,757.3" fill="rgb(195,223,201)" stroke="#0b1a0b" stroke-width="1" stroke-linejoin="round"/><polygon points="1052.2,762.6 1067.7,764.7 1063.6,772.5 1048.1,770.4" fill="rgb(195,223,201)" stroke="#0b1a0b" stroke-width="1" stroke-linejoin="round"/><polygon points="1067.7,764.7 1083.2,808.0 1079.1,815.8 1063.6,772.5" fill="rgb(191,220,202)" stroke="#0b1a0b" stroke-width="1" stroke-linejoin="round"/><polygon points="1083.2,808.0 1098.7,832.1 1094.6,839.8 1079.1,815.8" fill="rgb(186,217,204)" stroke="#0b1a0b" stroke-width="1" stroke-linejoin="round"/><polygon points="1098.7,832.1 1114.2,834.1 1110.1,841.9 1094.6,839.8" fill="rgb(184,216,204)" stroke="#0b1a0b" stroke-width="1" stroke-linejoin="round"/><polygon points="1114.2,834.1 1129.6,836.2 1125.5,844.0 1110.1,841.9" fill="rgb(184,216,204)" stroke="#0b1a0b" stroke-width="1" stroke-linejoin="round"/><polygon points="1129.6,836.2 1145.1,838.3 1141.0,846.0 1125.5,844.0" fill="rgb(184,216,204)" stroke="#0b1a0b" stroke-width="1" stroke-linejoin="round"/><polygon points="1145.1,838.3 1160.6,840.3 1156.5,848.1 1141.0,846.0" fill="rgb(184,216,204)" stroke="#0b1a0b" stroke-width="1" stroke-linejoin="round"/><polygon points="1160.6,840.3 1176.1,842.4 1172.0,850.1 1156.5,848.1" fill="rgb(184,216,204)" stroke="#0b1a0b" stroke-width="1" stroke-linejoin="round"/><polygon points="939.7,723.0 955.2,725.0 951.1,732.8 935.6,730.7" fill="rgb(200,226,200)" stroke="#0b1a0b" stroke-width="1" stroke-linejoin="round"/><polygon points="955.2,725.0 970.7,727.1 966.6,734.9 951.1,732.8" fill="rgb(200,226,200)" stroke="#0b1a0b" stroke-width="1" stroke-linejoin="round"/><polygon points="970.7,727.1 986.2,729.2 982.1,736.9 966.6,734.9" fill="rgb(200,226,200)" stroke="#0b1a0b" stroke-width="1" stroke-linejoin="round"/><polygon points="986.2,729.2 1001.6,731.2 997.5,739.0 982.1,736.9" fill="rgb(200,226,200)" stroke="#0b1a0b" stroke-width="1" stroke-linejoin="round"/><polygon points="1001.6,731.2 1017.1,733.3 1013.0,741.0 997.5,739.0" fill="rgb(200,226,200)" stroke="#0b1a0b" stroke-width="1" stroke-linejoin="round"/><polygon points="1017.1,733.3 1032.6,757.3 1028.5,765.1 1013.0,741.0" fill="rgb(198,225,200)" stroke="#0b1a0b" stroke-width="1" stroke-linejoin="round"/><polygon points="1032.6,757.3 1048.1,770.4 1044.0,778.2 1028.5,765.1" fill="rgb(195,223,201)" stroke="#0b1a0b" stroke-width="1" stroke-linejoin="round"/><polygon points="1048.1,770.4 1063.6,772.5 1059.5,780.2 1044.0,778.2" fill="rgb(195,223,201)" stroke="#0b1a0b" stroke-width="1" stroke-linejoin="round"/><polygon points="1063.6,772.5 1079.1,815.8 1075.0,823.5 1059.5,780.2" fill="rgb(191,220,202)" stroke="#0b1a0b" stroke-width="1" stroke-linejoin="round"/><polygon points="1079.1,815.8 1094.6,839.8 1090.5,847.6 1075.0,823.5" fill="rgb(186,217,204)" stroke="#0b1a0b" stroke-width="1" stroke-linejoin="round"/><polygon points="1094.6,839.8 1110.1,841.9 1106.0,849.6 1090.5,847.6" fill="rgb(184,216,204)" stroke="#0b1a0b" stroke-width="1" stroke-linejoin="round"/><polygon points="1110.1,841.9 1125.5,844.0 1121.4,851.7 1106.0,849.6" fill="rgb(184,216,204)" stroke="#0b1a0b" stroke-width="1" stroke-linejoin="round"/><polygon points="1125.5,844.0 1141.0,846.0 1136.9,853.8 1121.4,851.7" fill="rgb(184,216,204)" stroke="#0b1a0b" stroke-width="1" stroke-linejoin="round"/><polygon points="1141.0,846.0 1156.5,848.1 1152.4,855.8 1136.9,853.8" fill="rgb(184,216,204)" stroke="#0b1a0b" stroke-width="1" stroke-linejoin="round"/><polygon points="1156.5,848.1 1172.0,850.1 1167.9,857.9 1152.4,855.8" fill="rgb(184,216,204)" stroke="#0b1a0b" stroke-width="1" stroke-linejoin="round"/><polygon points="935.6,730.7 951.1,732.8 947.0,740.5 931.5,738.5" fill="rgb(200,226,200)" stroke="#0b1a0b" stroke-width="1" stroke-linejoin="round"/><polygon points="951.1,732.8 966.6,734.9 962.5,742.6 947.0,740.5" fill="rgb(200,226,200)" stroke="#0b1a0b" stroke-width="1" stroke-linejoin="round"/><polygon points="966.6,734.9 982.1,736.9 978.0,744.7 962.5,742.6" fill="rgb(200,226,200)" stroke="#0b1a0b" stroke-width="1" stroke-linejoin="round"/><polygon points="982.1,736.9 997.5,739.0 993.4,746.7 978.0,744.7" fill="rgb(200,226,200)" stroke="#0b1a0b" stroke-width="1" stroke-linejoin="round"/><polygon points="997.5,739.0 1013.0,741.0 1008.9,748.8 993.4,746.7" fill="rgb(200,226,200)" stroke="#0b1a0b" stroke-width="1" stroke-linejoin="round"/><polygon points="1013.0,741.0 1028.5,765.1 1024.4,772.9 1008.9,748.8" fill="rgb(198,225,200)" stroke="#0b1a0b" stroke-width="1" stroke-linejoin="round"/><polygon points="1028.5,765.1 1044.0,778.2 1039.9,785.9 1024.4,772.9" fill="rgb(195,223,201)" stroke="#0b1a0b" stroke-width="1" stroke-linejoin="round"/><polygon points="1044.0,778.2 1059.5,780.2 1055.4,788.0 1039.9,785.9" fill="rgb(195,223,201)" stroke="#0b1a0b" stroke-width="1" stroke-linejoin="round"/><polygon points="1059.5,780.2 1075.0,823.5 1070.9,831.3 1055.4,788.0" fill="rgb(191,220,202)" stroke="#0b1a0b" stroke-width="1" stroke-linejoin="round"/><polygon points="1075.0,823.5 1090.5,847.6 1086.4,855.3 1070.9,831.3" fill="rgb(186,217,204)" stroke="#0b1a0b" stroke-width="1" stroke-linejoin="round"/><polygon points="1090.5,847.6 1106.0,849.6 1101.9,857.4 1086.4,855.3" fill="rgb(184,216,204)" stroke="#0b1a0b" stroke-width="1" stroke-linejoin="round"/><polygon points="1106.0,849.6 1121.4,851.7 1117.3,859.5 1101.9,857.4" fill="rgb(184,216,204)" stroke="#0b1a0b" stroke-width="1" stroke-linejoin="round"/><polygon points="1121.4,851.7 1136.9,853.8 1132.8,861.5 1117.3,859.5" fill="rgb(184,216,204)" stroke="#0b1a0b" stroke-width="1" stroke-linejoin="round"/><polygon points="1136.9,853.8 1152.4,855.8 1148.3,863.6 1132.8,861.5" fill="rgb(184,216,204)" stroke="#0b1a0b" stroke-width="1" stroke-linejoin="round"/><polygon points="1152.4,855.8 1167.9,857.9 1163.8,865.6 1148.3,863.6" fill="rgb(184,216,204)" stroke="#0b1a0b" stroke-width="1" stroke-linejoin="round"/><polygon points="931.5,738.5 947.0,740.5 942.9,748.3 927.4,746.2" fill="rgb(200,226,200)" stroke="#0b1a0b" stroke-width="1" stroke-linejoin="round"/><polygon points="947.0,740.5 962.5,742.6 958.4,750.4 942.9,748.3" fill="rgb(200,226,200)" stroke="#0b1a0b" stroke-width="1" stroke-linejoin="round"/><polygon points="962.5,742.6 978.0,744.7 973.9,752.4 958.4,750.4" fill="rgb(200,226,200)" stroke="#0b1a0b" stroke-width="1" stroke-linejoin="round"/><polygon points="978.0,744.7 993.4,746.7 989.3,754.5 973.9,752.4" fill="rgb(200,226,200)" stroke="#0b1a0b" stroke-width="1" stroke-linejoin="round"/><polygon points="993.4,746.7 1008.9,748.8 1004.8,756.5 989.3,754.5" fill="rgb(200,226,200)" stroke="#0b1a0b" stroke-width="1" stroke-linejoin="round"/><polygon points="1008.9,748.8 1024.4,772.9 1020.3,780.6 1004.8,756.5" fill="rgb(198,225,200)" stroke="#0b1a0b" stroke-width="1" stroke-linejoin="round"/><polygon points="1024.4,772.9 1039.9,785.9 1035.8,793.7 1020.3,780.6" fill="rgb(195,223,201)" stroke="#0b1a0b" stroke-width="1" stroke-linejoin="round"/><polygon points="1039.9,785.9 1055.4,788.0 1051.3,795.7 1035.8,793.7" fill="rgb(195,223,201)" stroke="#0b1a0b" stroke-width="1" stroke-linejoin="round"/><polygon points="1055.4,788.0 1070.9,831.3 1066.8,839.0 1051.3,795.7" fill="rgb(191,220,202)" stroke="#0b1a0b" stroke-width="1" stroke-linejoin="round"/><polygon points="1070.9,831.3 1086.4,855.3 1082.3,863.1 1066.8,839.0" fill="rgb(186,217,204)" stroke="#0b1a0b" stroke-width="1" stroke-linejoin="round"/><polygon points="1086.4,855.3 1101.9,857.4 1097.8,865.2 1082.3,863.1" fill="rgb(184,216,204)" stroke="#0b1a0b" stroke-width="1" stroke-linejoin="round"/><polygon points="1101.9,857.4 1117.3,859.5 1113.2,867.2 1097.8,865.2" fill="rgb(184,216,204)" stroke="#0b1a0b" stroke-width="1" stroke-linejoin="round"/><polygon points="1117.3,859.5 1132.8,861.5 1128.7,869.3 1113.2,867.2" fill="rgb(184,216,204)" stroke="#0b1a0b" stroke-width="1" stroke-linejoin="round"/><polygon points="1132.8,861.5 1148.3,863.6 1144.2,871.3 1128.7,869.3" fill="rgb(184,216,204)" stroke="#0b1a0b" stroke-width="1" stroke-linejoin="round"/><polygon points="1148.3,863.6 1163.8,865.6 1159.7,873.4 1144.2,871.3" fill="rgb(184,216,204)" stroke="#0b1a0b" stroke-width="1" stroke-linejoin="round"/><polygon points="927.4,746.2 942.9,748.3 938.8,756.1 923.3,754.0" fill="rgb(200,226,200)" stroke="#0b1a0b" stroke-width="1" stroke-linejoin="round"/><polygon points="942.9,748.3 958.4,750.4 954.3,758.1 938.8,756.1" fill="rgb(200,226,200)" stroke="#0b1a0b" stroke-width="1" stroke-linejoin="round"/><polygon points="958.4,750.4 973.9,752.4 969.8,760.2 954.3,758.1" fill="rgb(200,226,200)" stroke="#0b1a0b" stroke-width="1" stroke-linejoin="round"/><polygon points="973.9,752.4 989.3,754.5 985.2,762.2 969.8,760.2" fill="rgb(200,226,200)" stroke="#0b1a0b" stroke-width="1" stroke-linejoin="round"/><polygon points="989.3,754.5 1004.8,756.5 1000.7,764.3 985.2,762.2" fill="rgb(200,226,200)" stroke="#0b1a0b" stroke-width="1" stroke-linejoin="round"/><polygon points="1004.8,756.5 1020.3,780.6 1016.2,788.4 1000.7,764.3" fill="rgb(198,225,200)" stroke="#0b1a0b" stroke-width="1" stroke-linejoin="round"/><polygon points="1020.3,780.6 1035.8,793.7 1031.7,801.4 1016.2,788.4" fill="rgb(195,223,201)" stroke="#0b1a0b" stroke-width="1" stroke-linejoin="round"/><polygon points="1035.8,793.7 1051.3,795.7 1047.2,803.5 1031.7,801.4" fill="rgb(195,223,201)" stroke="#0b1a0b" stroke-width="1" stroke-linejoin="round"/><polygon points="1051.3,795.7 1066.8,839.0 1062.7,846.8 1047.2,803.5" fill="rgb(191,220,202)" stroke="#0b1a0b" stroke-width="1" stroke-linejoin="round"/><polygon points="1066.8,839.0 1082.3,863.1 1078.2,870.8 1062.7,846.8" fill="rgb(186,217,204)" stroke="#0b1a0b" stroke-width="1" stroke-linejoin="round"/><polygon points="1082.3,863.1 1097.8,865.2 1093.7,872.9 1078.2,870.8" fill="rgb(184,216,204)" stroke="#0b1a0b" stroke-width="1" stroke-linejoin="round"/><polygon points="1097.8,865.2 1113.2,867.2 1109.1,875.0 1093.7,872.9" fill="rgb(184,216,204)" stroke="#0b1a0b" stroke-width="1" stroke-linejoin="round"/><polygon points="1113.2,867.2 1128.7,869.3 1124.6,877.0 1109.1,875.0" fill="rgb(184,216,204)" stroke="#0b1a0b" stroke-width="1" stroke-linejoin="round"/><polygon points="1128.7,869.3 1144.2,871.3 1140.1,879.1 1124.6,877.0" fill="rgb(184,216,204)" stroke="#0b1a0b" stroke-width="1" stroke-linejoin="round"/><polygon points="1144.2,871.3 1159.7,873.4 1155.6,881.1 1140.1,879.1" fill="rgb(184,216,204)" stroke="#0b1a0b" stroke-width="1" stroke-linejoin="round"/><polygon points="923.3,754.0 938.8,756.1 934.7,763.8 919.2,761.8" fill="rgb(200,226,200)" stroke="#0b1a0b" stroke-width="1" stroke-linejoin="round"/><polygon points="938.8,756.1 954.3,758.1 950.2,765.9 934.7,763.8" fill="rgb(200,226,200)" stroke="#0b1a0b" stroke-width="1" stroke-linejoin="round"/><polygon points="954.3,758.1 969.8,760.2 965.7,767.9 950.2,765.9" fill="rgb(200,226,200)" stroke="#0b1a0b" stroke-width="1" stroke-linejoin="round"/><polygon points="969.8,760.2 985.2,762.2 981.1,770.0 965.7,767.9" fill="rgb(200,226,200)" stroke="#0b1a0b" stroke-width="1" stroke-linejoin="round"/><polygon points="985.2,762.2 1000.7,764.3 996.6,772.0 981.1,770.0" fill="rgb(200,226,200)" stroke="#0b1a0b" stroke-width="1" stroke-linejoin="round"/><polygon points="1000.7,764.3 1016.2,788.4 1012.1,796.1 996.6,772.0" fill="rgb(198,225,200)" stroke="#0b1a0b" stroke-width="1" stroke-linejoin="round"/><polygon points="1016.2,788.4 1031.7,801.4 1027.6,809.2 1012.1,796.1" fill="rgb(195,223,201)" stroke="#0b1a0b" stroke-width="1" stroke-linejoin="round"/><polygon points="1031.7,801.4 1047.2,803.5 1043.1,811.2 1027.6,809.2" fill="rgb(195,223,201)" stroke="#0b1a0b" stroke-width="1" stroke-linejoin="round"/><polygon points="1047.2,803.5 1062.7,846.8 1058.6,854.5 1043.1,811.2" fill="rgb(191,220,202)" stroke="#0b1a0b" stroke-width="1" stroke-linejoin="round"/><polygon points="1062.7,846.8 1078.2,870.8 1074.1,878.6 1058.6,854.5" fill="rgb(186,217,204)" stroke="#0b1a0b" stroke-width="1" stroke-linejoin="round"/><polygon points="1078.2,870.8 1093.7,872.9 1089.6,880.7 1074.1,878.6" fill="rgb(184,216,204)" stroke="#0b1a0b" stroke-width="1" stroke-linejoin="round"/><polygon points="1093.7,872.9 1109.1,875.0 1105.0,882.7 1089.6,880.7" fill="rgb(184,216,204)" stroke="#0b1a0b" stroke-width="1" stroke-linejoin="round"/><polygon points="1109.1,875.0 1124.6,877.0 1120.5,884.8 1105.0,882.7" fill="rgb(184,216,204)" stroke="#0b1a0b" stroke-width="1" stroke-linejoin="round"/><polygon points="1124.6,877.0 1140.1,879.1 1136.0,886.8 1120.5,884.8" fill="rgb(184,216,204)" stroke="#0b1a0b" stroke-width="1" stroke-linejoin="round"/><polygon points="1140.1,879.1 1155.6,881.1 1151.5,888.9 1136.0,886.8" fill="rgb(184,216,204)" stroke="#0b1a0b" stroke-width="1" stroke-linejoin="round"/><line x1="980.7" y1="590.5" x2="1213.0" y2="621.4" stroke="#1a1a1a" stroke-width="1"/><line x1="980.7" y1="590.5" x2="919.2" y2="706.8" stroke="#3a3a44" stroke-width="1"/><line x1="919.2" y1="706.8" x2="919.2" y2="913.0" stroke="#6a6a76" stroke-width="1"/><line x1="919.2" y1="913.0" x2="1151.5" y2="943.9" stroke="#2a2a2a" stroke-width="1"/><line x1="1151.5" y1="943.9" x2="1213.0" y2="827.6" stroke="#3a3a3a" stroke-width="1"/><line x1="1213.0" y1="827.6" x2="1213.0" y2="621.4" stroke="#3a3a3a" stroke-width="1"/><line x1="919.2" y1="706.8" x2="1151.5" y2="737.6" stroke="rgba(40,60,50,.55)" stroke-width="1"/><line x1="1151.5" y1="737.6" x2="1213.0" y2="621.4" stroke="rgba(30,40,40,.75)" stroke-width="1"/><line x1="1151.5" y1="737.6" x2="1151.5" y2="943.9" stroke="rgba(40,70,60,.6)" stroke-width="1"/><line x1="1197.5" y1="674.3" x2="1213.0" y2="676.4" stroke="#111" stroke-width="1.2"/><circle cx="1197.5" cy="674.3" r="4.2" fill="#d21a1a" stroke="#7a0c0c" stroke-width=".8"/><circle cx="1213.0" cy="676.4" r="4.2" fill="#d21a1a" stroke="#7a0c0c" stroke-width=".8"/><circle cx="980.7" cy="645.5" r="3.4" fill="#fff" stroke="#111" stroke-width="1"/><line x1="1213.0" y1="621.4" x2="1220.5" y2="621.4" stroke="#222" stroke-width="1.2"/><text x="1245" y="625.4" font-size="11" text-anchor="end" fill="#1c1c24">0.20</text><line x1="1213.0" y1="676.4" x2="1220.5" y2="676.4" stroke="#222" stroke-width="1.2"/><text x="1245" y="680.4" font-size="11" text-anchor="end" fill="#1c1c24">0.00</text><line x1="1213.0" y1="731.4" x2="1220.5" y2="731.4" stroke="#222" stroke-width="1.2"/><text x="1248" y="735.4" font-size="11" text-anchor="end" fill="#1c1c24">-0.20</text><line x1="1213.0" y1="786.4" x2="1220.5" y2="786.4" stroke="#222" stroke-width="1.2"/><text x="1248" y="790.4" font-size="11" text-anchor="end" fill="#1c1c24">-0.40</text><text x="1236" y="726.5" font-size="10.5" text-anchor="middle" fill="#1c1c24">Z</text><line x1="933.2" y1="915.0" x2="933.2" y2="923.5" stroke="#c8242c" stroke-width="1.1"/><text x="930.7" y="934.3" font-size="11" text-anchor="middle" fill="#d0283a">0,0</text><line x1="1006.9" y1="924.8" x2="1006.9" y2="933.3" stroke="#c8242c" stroke-width="1.1"/><text x="1004" y="943.3" font-size="11" text-anchor="middle" fill="#d0283a">1,7</text><line x1="1079.5" y1="934.5" x2="1079.5" y2="943.0" stroke="#c8242c" stroke-width="1.1"/><text x="1077.2" y="952.3" font-size="11" text-anchor="middle" fill="#d0283a">3,3</text><text x="1146.5" y="962.8" font-size="11" text-anchor="middle" fill="#d0283a">5,0</text><line x1="1209.3" y1="834.6" x2="1209.3" y2="843.1" stroke="#3f8a3f" stroke-width="1.1"/><text x="1216.3" y="854.2" font-size="11" text-anchor="middle" fill="#4a7a4a">0,0</text><line x1="1190.5" y1="870.1" x2="1190.5" y2="878.6" stroke="#3f8a3f" stroke-width="1.1"/><text x="1198.3" y="890.5" font-size="11" text-anchor="middle" fill="#4a7a4a">1,7</text><line x1="1171" y1="907.0" x2="1171" y2="915.5" stroke="#3f8a3f" stroke-width="1.1"/><text x="1178" y="926.9" font-size="11" text-anchor="middle" fill="#4a7a4a">3,3</text><line x1="1151.5" y1="943.9" x2="1151.5" y2="952.4" stroke="#3f8a3f" stroke-width="1.1"/><text x="1161" y="962.8" font-size="11" text-anchor="middle" fill="#4a7a4a">5,0</text><text x="1216" y="910" font-size="10.5" text-anchor="middle" fill="#4a7a4a">Y</text></svg>
</div></body></html>
